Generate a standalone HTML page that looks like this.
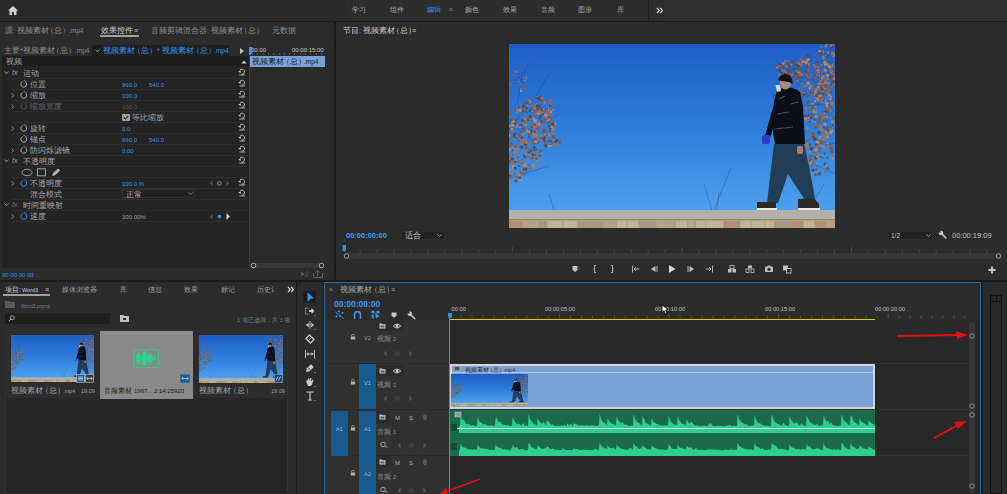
<!DOCTYPE html>
<html><head><meta charset="utf-8">
<style>
*{margin:0;padding:0;box-sizing:border-box}
html,body{width:1007px;height:494px;overflow:hidden;background:#1b1b1b;font-family:"Liberation Sans",sans-serif;color:#a8a8a8;font-size:8px}
.a{position:absolute}
.t{position:absolute;white-space:nowrap;line-height:10px}
.s{font-size:6.5px}
b{font-weight:normal}
.lp{margin-left:-2.5px}
.rp{margin-right:-1.5px}
</style></head><body>
<svg width="0" height="0" style="position:absolute">
<defs>
<linearGradient id="sky" x1="0" y1="0" x2="0" y2="1">
<stop offset="0" stop-color="#1f5ec6"/><stop offset="0.45" stop-color="#2d7cda"/><stop offset="0.9" stop-color="#4c9fee"/>
</linearGradient>
<symbol id="scene" viewBox="0 0 326 184" preserveAspectRatio="none"><rect width="326" height="184" fill="url(#sky)"/><g stroke="#3a3a50" stroke-width="0.6" fill="none" opacity="0.6"><path d="M0 42 L14 30 L20 18 M0 70 L25 55 L40 30 M0 95 L30 80 L50 70 M0 120 L28 110 L45 98 M0 135 L20 128 L40 122 M8 60 L12 40"/><path d="M326 20 L300 35 L270 22 M326 60 L290 62 L262 50 M326 100 L300 95 L285 110 M326 130 L305 120 L290 130 M326 45 L310 5"/><path d="M205 166 L222 124 M203 166 L195 140 M208 166 L210 148 M300 166 L315 140 M290 166 L300 150 M45 166 L40 150"/></g><circle cx="1.4" cy="84.4" r="1.7" fill="#a87050" opacity="0.85"/><circle cx="-2.9" cy="85.5" r="0.8" fill="#4a4a5a" opacity="0.85"/><circle cx="-0.6" cy="78.8" r="1.6" fill="#9a6448" opacity="0.85"/><circle cx="10.8" cy="82.5" r="1.2" fill="#c09070" opacity="0.85"/><circle cx="6.7" cy="68.5" r="1.1" fill="#a87050" opacity="0.85"/><circle cx="8.4" cy="67.1" r="0.8" fill="#9a6448" opacity="0.85"/><circle cx="23.2" cy="75.6" r="0.6" fill="#b07a58" opacity="0.85"/><circle cx="1.4" cy="69.7" r="1.0" fill="#7a5448" opacity="0.85"/><circle cx="30.3" cy="68.0" r="1.4" fill="#a87050" opacity="0.85"/><circle cx="27.6" cy="80.2" r="1.4" fill="#a87050" opacity="0.85"/><circle cx="45.9" cy="79.7" r="1.6" fill="#c09070" opacity="0.85"/><circle cx="19.4" cy="97.4" r="1.2" fill="#9a6448" opacity="0.85"/><circle cx="40.6" cy="87.5" r="1.1" fill="#4a4a5a" opacity="0.85"/><circle cx="18.3" cy="85.0" r="0.6" fill="#c09070" opacity="0.85"/><circle cx="31.9" cy="80.0" r="1.7" fill="#a87050" opacity="0.85"/><circle cx="4.5" cy="91.9" r="1.1" fill="#7a5448" opacity="0.85"/><circle cx="4.2" cy="67.2" r="0.9" fill="#9a6448" opacity="0.85"/><circle cx="18.8" cy="82.3" r="1.1" fill="#9a6448" opacity="0.85"/><circle cx="34.5" cy="92.6" r="0.6" fill="#a87050" opacity="0.85"/><circle cx="23.2" cy="71.9" r="1.3" fill="#a87050" opacity="0.85"/><circle cx="-5.8" cy="78.9" r="1.5" fill="#a87050" opacity="0.85"/><circle cx="14.5" cy="74.6" r="1.1" fill="#b07a58" opacity="0.85"/><circle cx="44.2" cy="80.1" r="1.8" fill="#7a5448" opacity="0.85"/><circle cx="11.8" cy="97.7" r="0.9" fill="#a87050" opacity="0.85"/><circle cx="40.2" cy="79.6" r="1.3" fill="#9a6448" opacity="0.85"/><circle cx="32.0" cy="79.4" r="0.9" fill="#4a4a5a" opacity="0.85"/><circle cx="1.8" cy="68.4" r="1.1" fill="#9a6448" opacity="0.85"/><circle cx="36.8" cy="88.2" r="0.9" fill="#7a5448" opacity="0.85"/><circle cx="6.1" cy="91.6" r="0.8" fill="#7a5448" opacity="0.85"/><circle cx="0.4" cy="81.5" r="1.6" fill="#b07a58" opacity="0.85"/><circle cx="9.9" cy="72.0" r="0.9" fill="#7a5448" opacity="0.85"/><circle cx="20.0" cy="88.7" r="1.5" fill="#7a5448" opacity="0.85"/><circle cx="28.3" cy="98.4" r="1.7" fill="#7a5448" opacity="0.85"/><circle cx="25.0" cy="82.1" r="0.7" fill="#7a5448" opacity="0.85"/><circle cx="32.3" cy="77.7" r="1.4" fill="#5e4444" opacity="0.85"/><circle cx="-1.7" cy="89.1" r="1.2" fill="#7a5448" opacity="0.85"/><circle cx="30.0" cy="95.1" r="0.7" fill="#b07a58" opacity="0.85"/><circle cx="-0.8" cy="82.1" r="1.3" fill="#9a6448" opacity="0.85"/><circle cx="15.3" cy="98.8" r="0.8" fill="#9a6448" opacity="0.85"/><circle cx="35.1" cy="85.4" r="0.9" fill="#9a6448" opacity="0.85"/><circle cx="27.1" cy="90.9" r="1.3" fill="#b07a58" opacity="0.85"/><circle cx="28.1" cy="84.1" r="1.1" fill="#5e4444" opacity="0.85"/><circle cx="8.1" cy="66.1" r="1.3" fill="#b07a58" opacity="0.85"/><circle cx="-1.1" cy="69.7" r="1.2" fill="#5e4444" opacity="0.85"/><circle cx="12.3" cy="61.3" r="0.6" fill="#c09070" opacity="0.85"/><circle cx="26.0" cy="82.4" r="1.0" fill="#b07a58" opacity="0.85"/><circle cx="27.1" cy="80.0" r="1.3" fill="#c09070" opacity="0.85"/><circle cx="44.2" cy="85.3" r="1.5" fill="#b07a58" opacity="0.85"/><circle cx="26.7" cy="61.6" r="1.0" fill="#c09070" opacity="0.85"/><circle cx="12.9" cy="80.9" r="1.6" fill="#4a4a5a" opacity="0.85"/><circle cx="38.1" cy="82.7" r="0.6" fill="#c09070" opacity="0.85"/><circle cx="5.3" cy="90.3" r="1.3" fill="#9a6448" opacity="0.85"/><circle cx="27.4" cy="83.7" r="0.9" fill="#a87050" opacity="0.85"/><circle cx="17.8" cy="67.7" r="1.5" fill="#7a5448" opacity="0.85"/><circle cx="2.9" cy="83.6" r="1.2" fill="#7a5448" opacity="0.85"/><circle cx="20.0" cy="76.5" r="1.3" fill="#a87050" opacity="0.85"/><circle cx="45.2" cy="82.7" r="0.7" fill="#4a4a5a" opacity="0.85"/><circle cx="1.2" cy="67.4" r="0.9" fill="#9a6448" opacity="0.85"/><circle cx="13.4" cy="85.6" r="1.3" fill="#7a5448" opacity="0.85"/><circle cx="32.0" cy="96.7" r="1.4" fill="#a87050" opacity="0.85"/><circle cx="7.2" cy="80.1" r="1.1" fill="#5e4444" opacity="0.85"/><circle cx="25.4" cy="92.4" r="1.6" fill="#b07a58" opacity="0.85"/><circle cx="31.8" cy="71.5" r="1.3" fill="#5e4444" opacity="0.85"/><circle cx="22.4" cy="87.1" r="1.0" fill="#4a4a5a" opacity="0.85"/><circle cx="26.4" cy="81.3" r="1.8" fill="#4a4a5a" opacity="0.85"/><circle cx="28.5" cy="91.7" r="0.9" fill="#b07a58" opacity="0.85"/><circle cx="27.8" cy="69.2" r="1.2" fill="#c09070" opacity="0.85"/><circle cx="10.5" cy="96.8" r="1.8" fill="#a87050" opacity="0.85"/><circle cx="9.9" cy="96.5" r="0.9" fill="#7a5448" opacity="0.85"/><circle cx="41.1" cy="84.3" r="1.3" fill="#5e4444" opacity="0.85"/><circle cx="8.5" cy="67.9" r="1.4" fill="#a87050" opacity="0.85"/><circle cx="16.1" cy="80.9" r="1.6" fill="#b07a58" opacity="0.85"/><circle cx="24.2" cy="62.4" r="1.8" fill="#9a6448" opacity="0.85"/><circle cx="0.5" cy="85.2" r="1.4" fill="#4a4a5a" opacity="0.85"/><circle cx="15.1" cy="84.1" r="0.8" fill="#4a4a5a" opacity="0.85"/><circle cx="9.1" cy="81.3" r="0.6" fill="#a87050" opacity="0.85"/><circle cx="15.2" cy="79.2" r="0.9" fill="#4a4a5a" opacity="0.85"/><circle cx="7.7" cy="93.8" r="1.2" fill="#7a5448" opacity="0.85"/><circle cx="30.4" cy="79.8" r="1.6" fill="#c09070" opacity="0.85"/><circle cx="26.4" cy="76.7" r="1.7" fill="#c09070" opacity="0.85"/><circle cx="6.7" cy="88.7" r="0.8" fill="#9a6448" opacity="0.85"/><circle cx="6.0" cy="90.5" r="1.7" fill="#4a4a5a" opacity="0.85"/><circle cx="26.4" cy="69.4" r="1.0" fill="#b07a58" opacity="0.85"/><circle cx="39.7" cy="90.8" r="1.6" fill="#c09070" opacity="0.85"/><circle cx="29.1" cy="86.9" r="1.1" fill="#9a6448" opacity="0.85"/><circle cx="38.9" cy="77.9" r="1.5" fill="#5e4444" opacity="0.85"/><circle cx="18.4" cy="96.9" r="0.6" fill="#7a5448" opacity="0.85"/><circle cx="35.0" cy="86.6" r="1.3" fill="#4a4a5a" opacity="0.85"/><circle cx="16.1" cy="98.9" r="0.9" fill="#4a4a5a" opacity="0.85"/><circle cx="41.4" cy="87.0" r="0.8" fill="#5e4444" opacity="0.85"/><circle cx="10.3" cy="62.4" r="1.2" fill="#7a5448" opacity="0.85"/><circle cx="35.2" cy="71.6" r="1.4" fill="#a87050" opacity="0.85"/><circle cx="37.2" cy="75.3" r="1.7" fill="#9a6448" opacity="0.85"/><circle cx="20.8" cy="66.8" r="1.3" fill="#4a4a5a" opacity="0.85"/><circle cx="17.2" cy="64.2" r="1.2" fill="#4a4a5a" opacity="0.85"/><circle cx="31.0" cy="74.4" r="1.4" fill="#4a4a5a" opacity="0.85"/><circle cx="33.9" cy="68.6" r="1.0" fill="#b07a58" opacity="0.85"/><circle cx="38.5" cy="77.1" r="1.3" fill="#b07a58" opacity="0.85"/><circle cx="12.5" cy="83.6" r="0.6" fill="#a87050" opacity="0.85"/><circle cx="45.2" cy="83.4" r="1.2" fill="#a87050" opacity="0.85"/><circle cx="-4.9" cy="74.6" r="0.7" fill="#9a6448" opacity="0.85"/><circle cx="17.6" cy="75.2" r="1.2" fill="#a87050" opacity="0.85"/><circle cx="40.4" cy="71.5" r="1.1" fill="#b07a58" opacity="0.85"/><circle cx="10.9" cy="81.2" r="1.1" fill="#4a4a5a" opacity="0.85"/><circle cx="42.9" cy="72.5" r="1.2" fill="#9a6448" opacity="0.85"/><circle cx="27.3" cy="94.7" r="1.7" fill="#b07a58" opacity="0.85"/><circle cx="12.4" cy="61.1" r="0.6" fill="#b07a58" opacity="0.85"/><circle cx="23.1" cy="96.4" r="1.0" fill="#5e4444" opacity="0.85"/><circle cx="20.6" cy="94.1" r="1.2" fill="#7a5448" opacity="0.85"/><circle cx="33.3" cy="90.0" r="0.9" fill="#b07a58" opacity="0.85"/><circle cx="12.7" cy="62.1" r="0.6" fill="#c09070" opacity="0.85"/><circle cx="3.8" cy="87.5" r="0.8" fill="#b07a58" opacity="0.85"/><circle cx="32.5" cy="69.0" r="0.9" fill="#b07a58" opacity="0.85"/><circle cx="32.1" cy="67.4" r="1.6" fill="#b07a58" opacity="0.85"/><circle cx="37.7" cy="71.9" r="1.0" fill="#b07a58" opacity="0.85"/><circle cx="14.1" cy="90.3" r="1.7" fill="#b07a58" opacity="0.85"/><circle cx="22.0" cy="71.3" r="0.7" fill="#b07a58" opacity="0.85"/><circle cx="25.2" cy="84.4" r="1.1" fill="#a87050" opacity="0.85"/><circle cx="28.3" cy="68.7" r="1.5" fill="#b07a58" opacity="0.85"/><circle cx="26.3" cy="95.1" r="1.6" fill="#9a6448" opacity="0.85"/><circle cx="26.5" cy="95.7" r="1.7" fill="#5e4444" opacity="0.85"/><circle cx="33.8" cy="89.4" r="1.5" fill="#7a5448" opacity="0.85"/><circle cx="43.7" cy="79.8" r="1.6" fill="#a87050" opacity="0.85"/><circle cx="24.0" cy="82.4" r="1.3" fill="#7a5448" opacity="0.85"/><circle cx="34.9" cy="72.2" r="0.8" fill="#9a6448" opacity="0.85"/><circle cx="26.8" cy="97.6" r="1.8" fill="#c09070" opacity="0.85"/><circle cx="25.3" cy="82.8" r="1.7" fill="#a87050" opacity="0.85"/><circle cx="27.1" cy="82.9" r="1.1" fill="#a87050" opacity="0.85"/><circle cx="3.0" cy="78.7" r="1.3" fill="#9a6448" opacity="0.85"/><circle cx="16.5" cy="77.0" r="0.8" fill="#a87050" opacity="0.85"/><circle cx="-1.4" cy="84.9" r="1.1" fill="#b07a58" opacity="0.85"/><circle cx="13.7" cy="76.2" r="1.6" fill="#5e4444" opacity="0.85"/><circle cx="38.2" cy="68.9" r="1.4" fill="#4a4a5a" opacity="0.85"/><circle cx="41.2" cy="69.5" r="1.3" fill="#b07a58" opacity="0.85"/><circle cx="-5.8" cy="79.5" r="1.6" fill="#5e4444" opacity="0.85"/><circle cx="18.4" cy="86.7" r="1.5" fill="#b07a58" opacity="0.85"/><circle cx="26.5" cy="68.3" r="1.7" fill="#7a5448" opacity="0.85"/><circle cx="12.3" cy="63.5" r="1.5" fill="#a87050" opacity="0.85"/><circle cx="23.0" cy="88.3" r="1.6" fill="#5e4444" opacity="0.85"/><circle cx="17.4" cy="80.4" r="1.0" fill="#c09070" opacity="0.85"/><circle cx="24.7" cy="77.4" r="0.9" fill="#c09070" opacity="0.85"/><circle cx="16.3" cy="88.9" r="1.1" fill="#b07a58" opacity="0.85"/><circle cx="4.1" cy="77.4" r="1.8" fill="#c09070" opacity="0.85"/><circle cx="22.1" cy="86.7" r="1.1" fill="#7a5448" opacity="0.85"/><circle cx="40.2" cy="82.2" r="1.5" fill="#5e4444" opacity="0.85"/><circle cx="2.7" cy="84.9" r="1.5" fill="#c09070" opacity="0.85"/><circle cx="14.2" cy="84.4" r="0.9" fill="#5e4444" opacity="0.85"/><circle cx="2.4" cy="75.6" r="1.8" fill="#7a5448" opacity="0.85"/><circle cx="24.7" cy="74.8" r="1.1" fill="#c09070" opacity="0.85"/><circle cx="37.8" cy="87.1" r="1.5" fill="#9a6448" opacity="0.85"/><circle cx="1.0" cy="92.7" r="1.1" fill="#b07a58" opacity="0.85"/><circle cx="31.8" cy="68.4" r="1.3" fill="#a87050" opacity="0.85"/><circle cx="35.9" cy="75.6" r="1.2" fill="#7a5448" opacity="0.85"/><circle cx="12.8" cy="93.5" r="1.2" fill="#5e4444" opacity="0.85"/><circle cx="7.1" cy="76.0" r="1.5" fill="#5e4444" opacity="0.85"/><circle cx="42.5" cy="83.0" r="1.3" fill="#c09070" opacity="0.85"/><circle cx="32.5" cy="94.5" r="1.1" fill="#5e4444" opacity="0.85"/><circle cx="19.9" cy="75.5" r="1.8" fill="#5e4444" opacity="0.85"/><circle cx="42.1" cy="88.5" r="1.1" fill="#a87050" opacity="0.85"/><circle cx="19.9" cy="97.4" r="0.7" fill="#9a6448" opacity="0.85"/><circle cx="40.4" cy="73.5" r="1.2" fill="#4a4a5a" opacity="0.85"/><circle cx="20.7" cy="96.8" r="0.7" fill="#a87050" opacity="0.85"/><circle cx="8.7" cy="82.5" r="0.7" fill="#7a5448" opacity="0.85"/><circle cx="28.8" cy="90.0" r="0.8" fill="#a87050" opacity="0.85"/><circle cx="7.2" cy="82.8" r="1.3" fill="#a87050" opacity="0.85"/><circle cx="5.3" cy="93.0" r="1.6" fill="#b07a58" opacity="0.85"/><circle cx="41.3" cy="75.0" r="0.9" fill="#9a6448" opacity="0.85"/><circle cx="5.6" cy="79.8" r="1.2" fill="#4a4a5a" opacity="0.85"/><circle cx="11.4" cy="88.1" r="1.4" fill="#7a5448" opacity="0.85"/><circle cx="16.4" cy="71.7" r="0.9" fill="#b07a58" opacity="0.85"/><circle cx="24.8" cy="89.3" r="1.8" fill="#b07a58" opacity="0.85"/><circle cx="23.7" cy="77.3" r="0.7" fill="#5e4444" opacity="0.85"/><circle cx="19.7" cy="83.3" r="0.6" fill="#b07a58" opacity="0.85"/><circle cx="13.2" cy="78.6" r="0.7" fill="#c09070" opacity="0.85"/><circle cx="26.7" cy="88.2" r="1.8" fill="#a87050" opacity="0.85"/><circle cx="8.2" cy="81.2" r="1.0" fill="#c09070" opacity="0.85"/><circle cx="36.2" cy="93.9" r="1.6" fill="#a87050" opacity="0.85"/><circle cx="27.5" cy="65.3" r="1.5" fill="#b07a58" opacity="0.85"/><circle cx="-1.1" cy="85.9" r="1.1" fill="#b07a58" opacity="0.85"/><circle cx="5.7" cy="91.9" r="1.8" fill="#5e4444" opacity="0.85"/><circle cx="14.2" cy="96.9" r="1.6" fill="#b07a58" opacity="0.85"/><circle cx="5.8" cy="85.3" r="0.7" fill="#5e4444" opacity="0.85"/><circle cx="26.6" cy="82.7" r="1.3" fill="#a87050" opacity="0.85"/><circle cx="27.1" cy="67.5" r="1.6" fill="#9a6448" opacity="0.85"/><circle cx="30.7" cy="84.2" r="1.4" fill="#9a6448" opacity="0.85"/><circle cx="13.8" cy="66.8" r="1.5" fill="#5e4444" opacity="0.85"/><circle cx="18.0" cy="87.4" r="1.0" fill="#c09070" opacity="0.85"/><circle cx="8.5" cy="96.9" r="1.0" fill="#a87050" opacity="0.85"/><circle cx="-2.6" cy="71.9" r="1.7" fill="#5e4444" opacity="0.85"/><circle cx="-1.6" cy="86.8" r="1.0" fill="#5e4444" opacity="0.85"/><circle cx="24.6" cy="99.4" r="1.5" fill="#7a5448" opacity="0.85"/><circle cx="20.2" cy="92.0" r="1.0" fill="#5e4444" opacity="0.85"/><circle cx="11.2" cy="66.3" r="1.6" fill="#c09070" opacity="0.85"/><circle cx="-1.4" cy="73.0" r="1.2" fill="#4a4a5a" opacity="0.85"/><circle cx="10.8" cy="75.4" r="0.7" fill="#a87050" opacity="0.85"/><circle cx="30.1" cy="72.8" r="0.6" fill="#7a5448" opacity="0.85"/><circle cx="29.7" cy="82.8" r="1.0" fill="#9a6448" opacity="0.85"/><circle cx="6.4" cy="65.4" r="0.7" fill="#7a5448" opacity="0.85"/><circle cx="13.4" cy="93.9" r="1.0" fill="#5e4444" opacity="0.85"/><circle cx="18.0" cy="61.1" r="0.7" fill="#c09070" opacity="0.85"/><circle cx="15.4" cy="74.9" r="1.6" fill="#a87050" opacity="0.85"/><circle cx="20.3" cy="89.4" r="1.5" fill="#7a5448" opacity="0.85"/><circle cx="10.7" cy="91.5" r="1.0" fill="#4a4a5a" opacity="0.85"/><circle cx="40.9" cy="76.8" r="1.2" fill="#7a5448" opacity="0.85"/><circle cx="22.4" cy="74.9" r="1.3" fill="#9a6448" opacity="0.85"/><circle cx="-0.0" cy="89.7" r="1.4" fill="#4a4a5a" opacity="0.85"/><circle cx="36.0" cy="80.3" r="0.7" fill="#a87050" opacity="0.85"/><circle cx="40.1" cy="75.8" r="1.2" fill="#c09070" opacity="0.85"/><circle cx="28.6" cy="80.4" r="1.7" fill="#b07a58" opacity="0.85"/><circle cx="20.3" cy="88.1" r="1.4" fill="#c09070" opacity="0.85"/><circle cx="25.8" cy="87.9" r="1.1" fill="#5e4444" opacity="0.85"/><circle cx="16.3" cy="98.6" r="1.2" fill="#c09070" opacity="0.85"/><circle cx="35.7" cy="90.6" r="1.5" fill="#b07a58" opacity="0.85"/><circle cx="39.2" cy="70.9" r="0.6" fill="#a87050" opacity="0.85"/><circle cx="24.2" cy="77.9" r="0.7" fill="#b07a58" opacity="0.85"/><circle cx="7.4" cy="91.9" r="1.3" fill="#a87050" opacity="0.85"/><circle cx="9.8" cy="74.7" r="0.8" fill="#5e4444" opacity="0.85"/><circle cx="-0.3" cy="91.0" r="1.7" fill="#c09070" opacity="0.85"/><circle cx="-2.4" cy="74.6" r="1.2" fill="#5e4444" opacity="0.85"/><circle cx="3.6" cy="81.2" r="1.7" fill="#c09070" opacity="0.85"/><circle cx="-4.3" cy="74.3" r="1.2" fill="#b07a58" opacity="0.85"/><circle cx="10.2" cy="85.5" r="0.8" fill="#4a4a5a" opacity="0.85"/><circle cx="5.8" cy="89.6" r="1.2" fill="#5e4444" opacity="0.85"/><circle cx="21.5" cy="75.3" r="1.7" fill="#9a6448" opacity="0.85"/><circle cx="37.4" cy="66.5" r="1.1" fill="#b07a58" opacity="0.85"/><circle cx="15.4" cy="64.8" r="0.8" fill="#b07a58" opacity="0.85"/><circle cx="21.4" cy="72.5" r="1.7" fill="#4a4a5a" opacity="0.85"/><circle cx="-0.6" cy="78.4" r="1.8" fill="#5e4444" opacity="0.85"/><circle cx="14.0" cy="79.5" r="1.3" fill="#b07a58" opacity="0.85"/><circle cx="43.6" cy="80.2" r="1.6" fill="#4a4a5a" opacity="0.85"/><circle cx="36.6" cy="66.3" r="1.3" fill="#7a5448" opacity="0.85"/><circle cx="39.1" cy="66.0" r="1.2" fill="#c09070" opacity="0.85"/><circle cx="17.3" cy="57.2" r="1.0" fill="#4a4a5a" opacity="0.85"/><circle cx="32.7" cy="66.1" r="1.4" fill="#4a4a5a" opacity="0.85"/><circle cx="33.4" cy="57.9" r="1.3" fill="#7a5448" opacity="0.85"/><circle cx="14.4" cy="62.4" r="1.8" fill="#5e4444" opacity="0.85"/><circle cx="28.4" cy="64.6" r="1.0" fill="#a87050" opacity="0.85"/><circle cx="27.9" cy="59.8" r="0.7" fill="#b07a58" opacity="0.85"/><circle cx="37.9" cy="65.9" r="1.2" fill="#4a4a5a" opacity="0.85"/><circle cx="36.2" cy="54.9" r="0.6" fill="#a87050" opacity="0.85"/><circle cx="27.4" cy="55.3" r="1.0" fill="#9a6448" opacity="0.85"/><circle cx="28.4" cy="62.3" r="1.8" fill="#4a4a5a" opacity="0.85"/><circle cx="27.1" cy="52.7" r="0.8" fill="#c09070" opacity="0.85"/><circle cx="21.6" cy="67.2" r="1.0" fill="#5e4444" opacity="0.85"/><circle cx="30.4" cy="54.5" r="0.7" fill="#b07a58" opacity="0.85"/><circle cx="34.2" cy="70.1" r="1.0" fill="#5e4444" opacity="0.85"/><circle cx="17.4" cy="58.7" r="1.0" fill="#4a4a5a" opacity="0.85"/><circle cx="26.2" cy="64.1" r="1.3" fill="#b07a58" opacity="0.85"/><circle cx="24.1" cy="54.4" r="0.8" fill="#a87050" opacity="0.85"/><circle cx="40.6" cy="63.5" r="1.4" fill="#9a6448" opacity="0.85"/><circle cx="30.9" cy="65.9" r="0.7" fill="#a87050" opacity="0.85"/><circle cx="31.2" cy="56.2" r="1.6" fill="#7a5448" opacity="0.85"/><circle cx="34.7" cy="65.5" r="0.8" fill="#c09070" opacity="0.85"/><circle cx="23.1" cy="65.8" r="1.1" fill="#9a6448" opacity="0.85"/><circle cx="28.2" cy="54.3" r="1.0" fill="#4a4a5a" opacity="0.85"/><circle cx="33.2" cy="54.1" r="1.3" fill="#9a6448" opacity="0.85"/><circle cx="29.5" cy="66.3" r="1.0" fill="#a87050" opacity="0.85"/><circle cx="37.7" cy="65.8" r="1.2" fill="#4a4a5a" opacity="0.85"/><circle cx="28.6" cy="65.1" r="1.5" fill="#5e4444" opacity="0.85"/><circle cx="31.6" cy="52.5" r="1.3" fill="#5e4444" opacity="0.85"/><circle cx="21.3" cy="57.4" r="1.3" fill="#b07a58" opacity="0.85"/><circle cx="41.5" cy="61.4" r="1.5" fill="#4a4a5a" opacity="0.85"/><circle cx="41.1" cy="59.0" r="0.6" fill="#c09070" opacity="0.85"/><circle cx="31.5" cy="64.7" r="0.9" fill="#7a5448" opacity="0.85"/><circle cx="22.0" cy="64.9" r="0.7" fill="#4a4a5a" opacity="0.85"/><circle cx="23.0" cy="67.2" r="0.7" fill="#c09070" opacity="0.85"/><circle cx="40.0" cy="69.2" r="1.3" fill="#7a5448" opacity="0.85"/><circle cx="44.1" cy="65.7" r="0.8" fill="#c09070" opacity="0.85"/><circle cx="44.4" cy="61.6" r="1.3" fill="#9a6448" opacity="0.85"/><circle cx="30.9" cy="61.8" r="1.4" fill="#5e4444" opacity="0.85"/><circle cx="30.7" cy="69.6" r="1.6" fill="#b07a58" opacity="0.85"/><circle cx="18.2" cy="56.8" r="1.1" fill="#a87050" opacity="0.85"/><circle cx="36.8" cy="71.0" r="1.7" fill="#c09070" opacity="0.85"/><circle cx="39.0" cy="68.6" r="1.6" fill="#a87050" opacity="0.85"/><circle cx="20.4" cy="56.7" r="1.5" fill="#b07a58" opacity="0.85"/><circle cx="33.4" cy="68.5" r="0.8" fill="#a87050" opacity="0.85"/><circle cx="37.5" cy="66.3" r="1.0" fill="#b07a58" opacity="0.85"/><circle cx="29.0" cy="69.5" r="1.0" fill="#c09070" opacity="0.85"/><circle cx="32.9" cy="53.7" r="1.5" fill="#a87050" opacity="0.85"/><circle cx="42.0" cy="60.0" r="1.2" fill="#a87050" opacity="0.85"/><circle cx="42.2" cy="56.2" r="1.3" fill="#a87050" opacity="0.85"/><circle cx="30.1" cy="55.0" r="1.8" fill="#4a4a5a" opacity="0.85"/><circle cx="41.0" cy="57.3" r="1.6" fill="#9a6448" opacity="0.85"/><circle cx="16.1" cy="58.2" r="1.2" fill="#7a5448" opacity="0.85"/><circle cx="19.7" cy="61.2" r="0.6" fill="#9a6448" opacity="0.85"/><circle cx="26.4" cy="69.5" r="1.1" fill="#a87050" opacity="0.85"/><circle cx="18.7" cy="57.0" r="1.0" fill="#7a5448" opacity="0.85"/><circle cx="35.7" cy="58.6" r="1.6" fill="#b07a58" opacity="0.85"/><circle cx="19.9" cy="61.9" r="0.7" fill="#c09070" opacity="0.85"/><circle cx="42.0" cy="67.9" r="1.3" fill="#c09070" opacity="0.85"/><circle cx="7.1" cy="116.7" r="0.7" fill="#c09070" opacity="0.85"/><circle cx="28.4" cy="109.3" r="1.6" fill="#a87050" opacity="0.85"/><circle cx="7.3" cy="109.5" r="1.4" fill="#a87050" opacity="0.85"/><circle cx="-1.6" cy="105.8" r="0.7" fill="#4a4a5a" opacity="0.85"/><circle cx="25.6" cy="123.0" r="1.3" fill="#a87050" opacity="0.85"/><circle cx="22.9" cy="112.0" r="1.0" fill="#5e4444" opacity="0.85"/><circle cx="19.6" cy="121.4" r="1.1" fill="#7a5448" opacity="0.85"/><circle cx="5.4" cy="117.7" r="1.3" fill="#9a6448" opacity="0.85"/><circle cx="9.8" cy="122.1" r="1.0" fill="#5e4444" opacity="0.85"/><circle cx="-3.4" cy="112.2" r="1.8" fill="#a87050" opacity="0.85"/><circle cx="19.9" cy="107.0" r="1.6" fill="#c09070" opacity="0.85"/><circle cx="20.3" cy="107.7" r="1.6" fill="#5e4444" opacity="0.85"/><circle cx="15.8" cy="110.8" r="1.4" fill="#c09070" opacity="0.85"/><circle cx="22.1" cy="111.8" r="1.4" fill="#b07a58" opacity="0.85"/><circle cx="30.9" cy="107.1" r="1.4" fill="#5e4444" opacity="0.85"/><circle cx="12.5" cy="103.2" r="1.7" fill="#4a4a5a" opacity="0.85"/><circle cx="-0.8" cy="119.2" r="1.0" fill="#4a4a5a" opacity="0.85"/><circle cx="9.2" cy="113.5" r="0.9" fill="#5e4444" opacity="0.85"/><circle cx="24.9" cy="121.1" r="0.9" fill="#c09070" opacity="0.85"/><circle cx="15.3" cy="125.0" r="1.5" fill="#5e4444" opacity="0.85"/><circle cx="18.3" cy="101.1" r="0.7" fill="#7a5448" opacity="0.85"/><circle cx="15.3" cy="120.7" r="1.7" fill="#c09070" opacity="0.85"/><circle cx="15.0" cy="117.8" r="1.4" fill="#a87050" opacity="0.85"/><circle cx="25.9" cy="110.9" r="1.2" fill="#7a5448" opacity="0.85"/><circle cx="15.3" cy="111.3" r="1.3" fill="#7a5448" opacity="0.85"/><circle cx="13.9" cy="126.3" r="0.7" fill="#5e4444" opacity="0.85"/><circle cx="21.8" cy="111.5" r="0.8" fill="#c09070" opacity="0.85"/><circle cx="6.6" cy="109.9" r="1.7" fill="#9a6448" opacity="0.85"/><circle cx="1.6" cy="101.4" r="1.3" fill="#9a6448" opacity="0.85"/><circle cx="25.5" cy="107.1" r="0.8" fill="#7a5448" opacity="0.85"/><circle cx="16.9" cy="97.0" r="1.0" fill="#a87050" opacity="0.85"/><circle cx="16.7" cy="100.7" r="1.2" fill="#4a4a5a" opacity="0.85"/><circle cx="2.2" cy="100.1" r="1.5" fill="#7a5448" opacity="0.85"/><circle cx="21.3" cy="124.5" r="0.8" fill="#7a5448" opacity="0.85"/><circle cx="0.5" cy="117.2" r="1.3" fill="#5e4444" opacity="0.85"/><circle cx="17.6" cy="98.1" r="0.9" fill="#a87050" opacity="0.85"/><circle cx="-2.0" cy="108.0" r="1.3" fill="#5e4444" opacity="0.85"/><circle cx="27.6" cy="114.7" r="1.5" fill="#7a5448" opacity="0.85"/><circle cx="-2.0" cy="116.8" r="1.0" fill="#7a5448" opacity="0.85"/><circle cx="26.6" cy="113.3" r="1.1" fill="#a87050" opacity="0.85"/><circle cx="11.2" cy="97.4" r="0.6" fill="#9a6448" opacity="0.85"/><circle cx="25.3" cy="105.4" r="1.3" fill="#4a4a5a" opacity="0.85"/><circle cx="11.5" cy="99.6" r="0.7" fill="#a87050" opacity="0.85"/><circle cx="23.7" cy="114.4" r="1.3" fill="#7a5448" opacity="0.85"/><circle cx="17.0" cy="98.3" r="1.2" fill="#c09070" opacity="0.85"/><circle cx="17.2" cy="106.0" r="0.9" fill="#b07a58" opacity="0.85"/><circle cx="-0.6" cy="112.3" r="1.3" fill="#a87050" opacity="0.85"/><circle cx="24.7" cy="115.8" r="1.0" fill="#b07a58" opacity="0.85"/><circle cx="9.0" cy="97.0" r="0.8" fill="#4a4a5a" opacity="0.85"/><circle cx="15.3" cy="96.2" r="0.8" fill="#a87050" opacity="0.85"/><circle cx="-3.7" cy="109.8" r="0.6" fill="#a87050" opacity="0.85"/><circle cx="19.2" cy="108.2" r="1.1" fill="#5e4444" opacity="0.85"/><circle cx="-3.1" cy="114.7" r="1.8" fill="#c09070" opacity="0.85"/><circle cx="29.7" cy="111.7" r="1.5" fill="#b07a58" opacity="0.85"/><circle cx="12.2" cy="117.3" r="1.6" fill="#a87050" opacity="0.85"/><circle cx="-2.9" cy="115.7" r="1.0" fill="#5e4444" opacity="0.85"/><circle cx="30.3" cy="106.9" r="0.9" fill="#b07a58" opacity="0.85"/><circle cx="2.1" cy="119.4" r="0.7" fill="#5e4444" opacity="0.85"/><circle cx="-1.7" cy="105.7" r="1.7" fill="#b07a58" opacity="0.85"/><circle cx="3.0" cy="114.3" r="1.6" fill="#a87050" opacity="0.85"/><circle cx="11.1" cy="114.5" r="1.1" fill="#b07a58" opacity="0.85"/><circle cx="19.4" cy="122.8" r="0.8" fill="#b07a58" opacity="0.85"/><circle cx="2.8" cy="119.2" r="1.5" fill="#a87050" opacity="0.85"/><circle cx="-3.0" cy="117.2" r="1.4" fill="#4a4a5a" opacity="0.85"/><circle cx="0.8" cy="113.0" r="1.1" fill="#9a6448" opacity="0.85"/><circle cx="10.1" cy="103.0" r="0.9" fill="#9a6448" opacity="0.85"/><circle cx="-1.4" cy="110.4" r="1.2" fill="#7a5448" opacity="0.85"/><circle cx="27.5" cy="105.7" r="0.9" fill="#5e4444" opacity="0.85"/><circle cx="28.4" cy="116.8" r="1.5" fill="#b07a58" opacity="0.85"/><circle cx="15.5" cy="98.5" r="1.7" fill="#9a6448" opacity="0.85"/><circle cx="30.5" cy="111.8" r="1.1" fill="#4a4a5a" opacity="0.85"/><circle cx="21.6" cy="105.9" r="1.5" fill="#7a5448" opacity="0.85"/><circle cx="9.2" cy="104.3" r="1.3" fill="#a87050" opacity="0.85"/><circle cx="20.8" cy="113.6" r="1.3" fill="#9a6448" opacity="0.85"/><circle cx="17.0" cy="121.9" r="1.2" fill="#c09070" opacity="0.85"/><circle cx="23.9" cy="122.1" r="0.9" fill="#c09070" opacity="0.85"/><circle cx="3.5" cy="114.9" r="1.7" fill="#4a4a5a" opacity="0.85"/><circle cx="11.1" cy="125.3" r="1.1" fill="#a87050" opacity="0.85"/><circle cx="3.3" cy="111.0" r="0.7" fill="#5e4444" opacity="0.85"/><circle cx="9.3" cy="118.1" r="0.6" fill="#9a6448" opacity="0.85"/><circle cx="13.8" cy="100.9" r="0.6" fill="#4a4a5a" opacity="0.85"/><circle cx="23.7" cy="110.7" r="1.4" fill="#4a4a5a" opacity="0.85"/><circle cx="17.1" cy="125.0" r="1.4" fill="#4a4a5a" opacity="0.85"/><circle cx="19.9" cy="106.3" r="1.4" fill="#9a6448" opacity="0.85"/><circle cx="15.9" cy="106.7" r="1.2" fill="#a87050" opacity="0.85"/><circle cx="6.3" cy="118.1" r="1.2" fill="#5e4444" opacity="0.85"/><circle cx="17.1" cy="127.1" r="0.8" fill="#4a4a5a" opacity="0.85"/><circle cx="21.3" cy="123.3" r="0.9" fill="#9a6448" opacity="0.85"/><circle cx="13.2" cy="96.8" r="1.6" fill="#a87050" opacity="0.85"/><circle cx="0.9" cy="105.4" r="1.3" fill="#c09070" opacity="0.85"/><circle cx="28.7" cy="104.2" r="0.7" fill="#9a6448" opacity="0.85"/><circle cx="22.0" cy="107.6" r="1.1" fill="#4a4a5a" opacity="0.85"/><circle cx="3.4" cy="106.4" r="1.0" fill="#5e4444" opacity="0.85"/><circle cx="17.0" cy="113.3" r="1.0" fill="#5e4444" opacity="0.85"/><circle cx="5.6" cy="108.7" r="1.4" fill="#b07a58" opacity="0.85"/><circle cx="7.0" cy="104.3" r="1.0" fill="#5e4444" opacity="0.85"/><circle cx="28.9" cy="114.6" r="0.9" fill="#9a6448" opacity="0.85"/><circle cx="4.1" cy="103.0" r="1.1" fill="#a87050" opacity="0.85"/><circle cx="18.3" cy="113.6" r="1.2" fill="#a87050" opacity="0.85"/><circle cx="1.3" cy="122.3" r="0.6" fill="#b07a58" opacity="0.85"/><circle cx="10.2" cy="104.4" r="1.2" fill="#a87050" opacity="0.85"/><circle cx="20.9" cy="111.1" r="0.8" fill="#b07a58" opacity="0.85"/><circle cx="13.6" cy="119.5" r="1.2" fill="#7a5448" opacity="0.85"/><circle cx="15.1" cy="111.9" r="1.3" fill="#4a4a5a" opacity="0.85"/><circle cx="6.2" cy="102.4" r="1.3" fill="#7a5448" opacity="0.85"/><circle cx="25.2" cy="103.2" r="1.6" fill="#5e4444" opacity="0.85"/><circle cx="4.3" cy="124.4" r="1.0" fill="#c09070" opacity="0.85"/><circle cx="17.0" cy="121.7" r="0.8" fill="#b07a58" opacity="0.85"/><circle cx="17.2" cy="106.3" r="1.3" fill="#a87050" opacity="0.85"/><circle cx="17.3" cy="103.8" r="1.1" fill="#5e4444" opacity="0.85"/><circle cx="13.9" cy="100.3" r="0.9" fill="#b07a58" opacity="0.85"/><circle cx="4.2" cy="122.2" r="1.7" fill="#c09070" opacity="0.85"/><circle cx="17.2" cy="114.9" r="0.7" fill="#9a6448" opacity="0.85"/><circle cx="21.5" cy="106.1" r="1.6" fill="#7a5448" opacity="0.85"/><circle cx="15.7" cy="101.0" r="0.8" fill="#4a4a5a" opacity="0.85"/><circle cx="3.3" cy="117.8" r="1.0" fill="#a87050" opacity="0.85"/><circle cx="-2.0" cy="111.3" r="1.1" fill="#c09070" opacity="0.85"/><circle cx="6.8" cy="104.7" r="1.4" fill="#b07a58" opacity="0.85"/><circle cx="6.1" cy="124.1" r="1.6" fill="#4a4a5a" opacity="0.85"/><circle cx="26.3" cy="123.5" r="1.4" fill="#b07a58" opacity="0.85"/><circle cx="32.2" cy="91.5" r="1.4" fill="#b07a58" opacity="0.85"/><circle cx="42.9" cy="101.3" r="0.9" fill="#c09070" opacity="0.85"/><circle cx="40.6" cy="96.8" r="1.2" fill="#4a4a5a" opacity="0.85"/><circle cx="44.3" cy="95.5" r="1.3" fill="#a87050" opacity="0.85"/><circle cx="39.9" cy="101.7" r="1.0" fill="#c09070" opacity="0.85"/><circle cx="42.6" cy="95.9" r="1.3" fill="#9a6448" opacity="0.85"/><circle cx="43.6" cy="93.8" r="1.0" fill="#7a5448" opacity="0.85"/><circle cx="44.2" cy="95.9" r="0.9" fill="#9a6448" opacity="0.85"/><circle cx="45.5" cy="90.4" r="0.8" fill="#9a6448" opacity="0.85"/><circle cx="36.1" cy="101.8" r="1.4" fill="#5e4444" opacity="0.85"/><circle cx="41.7" cy="101.9" r="1.0" fill="#b07a58" opacity="0.85"/><circle cx="47.4" cy="95.5" r="1.3" fill="#7a5448" opacity="0.85"/><circle cx="37.7" cy="102.4" r="1.0" fill="#4a4a5a" opacity="0.85"/><circle cx="49.1" cy="100.2" r="0.9" fill="#a87050" opacity="0.85"/><circle cx="35.7" cy="97.1" r="1.5" fill="#5e4444" opacity="0.85"/><circle cx="35.8" cy="94.9" r="1.2" fill="#5e4444" opacity="0.85"/><circle cx="38.5" cy="97.8" r="0.8" fill="#7a5448" opacity="0.85"/><circle cx="39.8" cy="97.6" r="0.7" fill="#4a4a5a" opacity="0.85"/><circle cx="38.8" cy="97.8" r="0.8" fill="#a87050" opacity="0.85"/><circle cx="46.8" cy="100.8" r="1.6" fill="#a87050" opacity="0.85"/><circle cx="32.3" cy="96.4" r="1.4" fill="#a87050" opacity="0.85"/><circle cx="34.8" cy="94.9" r="1.2" fill="#4a4a5a" opacity="0.85"/><circle cx="35.5" cy="93.4" r="1.5" fill="#4a4a5a" opacity="0.85"/><circle cx="40.0" cy="102.3" r="1.2" fill="#c09070" opacity="0.85"/><circle cx="50.6" cy="97.9" r="1.5" fill="#7a5448" opacity="0.85"/><circle cx="42.4" cy="97.3" r="1.0" fill="#4a4a5a" opacity="0.85"/><circle cx="37.2" cy="95.4" r="1.1" fill="#b07a58" opacity="0.85"/><circle cx="46.7" cy="97.6" r="1.4" fill="#5e4444" opacity="0.85"/><circle cx="43.9" cy="90.2" r="1.3" fill="#a87050" opacity="0.85"/><circle cx="36.9" cy="100.8" r="1.3" fill="#4a4a5a" opacity="0.85"/><circle cx="43.8" cy="95.8" r="1.6" fill="#a87050" opacity="0.85"/><circle cx="44.1" cy="92.2" r="1.5" fill="#7a5448" opacity="0.85"/><circle cx="49.0" cy="96.8" r="0.8" fill="#a87050" opacity="0.85"/><circle cx="38.6" cy="91.1" r="0.9" fill="#5e4444" opacity="0.85"/><circle cx="34.4" cy="92.6" r="0.9" fill="#9a6448" opacity="0.85"/><circle cx="45.6" cy="93.8" r="0.7" fill="#5e4444" opacity="0.85"/><circle cx="41.2" cy="98.9" r="0.6" fill="#b07a58" opacity="0.85"/><circle cx="30.5" cy="94.3" r="0.8" fill="#9a6448" opacity="0.85"/><circle cx="44.1" cy="99.5" r="0.8" fill="#9a6448" opacity="0.85"/><circle cx="48.5" cy="96.3" r="1.0" fill="#5e4444" opacity="0.85"/><circle cx="15.0" cy="130.3" r="1.4" fill="#9a6448" opacity="0.85"/><circle cx="11.3" cy="129.7" r="1.4" fill="#9a6448" opacity="0.85"/><circle cx="4.0" cy="130.4" r="1.1" fill="#b07a58" opacity="0.85"/><circle cx="0.9" cy="132.0" r="1.5" fill="#4a4a5a" opacity="0.85"/><circle cx="7.0" cy="136.9" r="1.5" fill="#5e4444" opacity="0.85"/><circle cx="13.2" cy="128.4" r="1.1" fill="#9a6448" opacity="0.85"/><circle cx="11.8" cy="135.8" r="1.0" fill="#c09070" opacity="0.85"/><circle cx="13.9" cy="133.6" r="0.9" fill="#a87050" opacity="0.85"/><circle cx="11.9" cy="128.3" r="1.1" fill="#7a5448" opacity="0.85"/><circle cx="10.5" cy="131.0" r="1.3" fill="#c09070" opacity="0.85"/><circle cx="1.8" cy="133.4" r="1.0" fill="#a87050" opacity="0.85"/><circle cx="3.1" cy="132.0" r="1.1" fill="#9a6448" opacity="0.85"/><circle cx="6.6" cy="131.9" r="1.2" fill="#a87050" opacity="0.85"/><circle cx="7.6" cy="133.3" r="0.7" fill="#5e4444" opacity="0.85"/><circle cx="11.2" cy="135.4" r="1.6" fill="#c09070" opacity="0.85"/><circle cx="5.5" cy="130.2" r="1.1" fill="#7a5448" opacity="0.85"/><circle cx="1.9" cy="135.2" r="0.7" fill="#a87050" opacity="0.85"/><circle cx="10.7" cy="133.7" r="1.5" fill="#4a4a5a" opacity="0.85"/><circle cx="14.7" cy="129.9" r="1.4" fill="#7a5448" opacity="0.85"/><circle cx="8.0" cy="135.1" r="0.8" fill="#9a6448" opacity="0.85"/><circle cx="8.8" cy="29.2" r="1.1" fill="#a87050" opacity="0.85"/><circle cx="10.3" cy="37.6" r="0.8" fill="#a87050" opacity="0.85"/><circle cx="8.5" cy="47.0" r="0.6" fill="#7a5448" opacity="0.85"/><circle cx="1.9" cy="40.5" r="1.2" fill="#9a6448" opacity="0.85"/><circle cx="12.9" cy="23.7" r="1.1" fill="#7a5448" opacity="0.85"/><circle cx="12.5" cy="35.4" r="1.3" fill="#4a4a5a" opacity="0.85"/><circle cx="7.9" cy="39.3" r="0.5" fill="#5e4444" opacity="0.85"/><circle cx="14.5" cy="34.2" r="0.7" fill="#a87050" opacity="0.85"/><circle cx="12.6" cy="43.9" r="1.2" fill="#7a5448" opacity="0.85"/><circle cx="3.2" cy="38.1" r="0.6" fill="#c09070" opacity="0.85"/><circle cx="12.1" cy="46.7" r="1.2" fill="#c09070" opacity="0.85"/><circle cx="17.4" cy="34.0" r="1.3" fill="#a87050" opacity="0.85"/><circle cx="15.8" cy="36.8" r="0.8" fill="#c09070" opacity="0.85"/><circle cx="17.6" cy="32.2" r="0.7" fill="#b07a58" opacity="0.85"/><circle cx="11.5" cy="40.5" r="1.1" fill="#a87050" opacity="0.85"/><circle cx="15.1" cy="37.9" r="0.7" fill="#5e4444" opacity="0.85"/><circle cx="5.4" cy="30.7" r="0.7" fill="#9a6448" opacity="0.85"/><circle cx="6.9" cy="24.8" r="0.8" fill="#5e4444" opacity="0.85"/><circle cx="10.6" cy="29.8" r="0.6" fill="#5e4444" opacity="0.85"/><circle cx="1.9" cy="41.8" r="0.8" fill="#a87050" opacity="0.85"/><circle cx="12.3" cy="39.7" r="0.6" fill="#7a5448" opacity="0.85"/><circle cx="8.6" cy="29.5" r="1.0" fill="#5e4444" opacity="0.85"/><circle cx="16.7" cy="45.2" r="1.3" fill="#9a6448" opacity="0.85"/><circle cx="7.0" cy="27.5" r="1.2" fill="#a87050" opacity="0.85"/><circle cx="12.0" cy="44.5" r="0.7" fill="#c09070" opacity="0.85"/><circle cx="318.1" cy="37.6" r="0.9" fill="#a87050" opacity="0.85"/><circle cx="298.8" cy="22.4" r="1.4" fill="#9a6448" opacity="0.85"/><circle cx="299.9" cy="22.4" r="1.1" fill="#b07a58" opacity="0.85"/><circle cx="287.9" cy="20.7" r="1.1" fill="#5e4444" opacity="0.85"/><circle cx="294.2" cy="48.7" r="1.6" fill="#7a5448" opacity="0.85"/><circle cx="319.1" cy="42.9" r="1.1" fill="#b07a58" opacity="0.85"/><circle cx="316.3" cy="39.0" r="1.0" fill="#c09070" opacity="0.85"/><circle cx="289.5" cy="22.1" r="1.8" fill="#4a4a5a" opacity="0.85"/><circle cx="308.2" cy="31.0" r="1.4" fill="#a87050" opacity="0.85"/><circle cx="313.2" cy="36.0" r="1.2" fill="#a87050" opacity="0.85"/><circle cx="296.8" cy="17.0" r="1.8" fill="#9a6448" opacity="0.85"/><circle cx="318.8" cy="31.4" r="1.6" fill="#c09070" opacity="0.85"/><circle cx="297.9" cy="30.1" r="0.7" fill="#a87050" opacity="0.85"/><circle cx="294.1" cy="15.7" r="1.7" fill="#7a5448" opacity="0.85"/><circle cx="315.0" cy="31.4" r="1.0" fill="#b07a58" opacity="0.85"/><circle cx="298.2" cy="31.3" r="1.6" fill="#9a6448" opacity="0.85"/><circle cx="313.8" cy="47.4" r="1.3" fill="#c09070" opacity="0.85"/><circle cx="319.9" cy="22.0" r="1.8" fill="#a87050" opacity="0.85"/><circle cx="306.2" cy="24.5" r="1.2" fill="#9a6448" opacity="0.85"/><circle cx="295.8" cy="41.7" r="1.6" fill="#9a6448" opacity="0.85"/><circle cx="316.0" cy="40.9" r="1.3" fill="#9a6448" opacity="0.85"/><circle cx="306.1" cy="25.3" r="1.8" fill="#7a5448" opacity="0.85"/><circle cx="316.8" cy="43.7" r="0.8" fill="#9a6448" opacity="0.85"/><circle cx="292.8" cy="31.3" r="1.0" fill="#b07a58" opacity="0.85"/><circle cx="305.3" cy="46.2" r="0.7" fill="#b07a58" opacity="0.85"/><circle cx="297.3" cy="27.2" r="0.7" fill="#b07a58" opacity="0.85"/><circle cx="309.2" cy="26.3" r="1.6" fill="#b07a58" opacity="0.85"/><circle cx="315.2" cy="45.0" r="0.8" fill="#7a5448" opacity="0.85"/><circle cx="289.4" cy="18.7" r="1.8" fill="#a87050" opacity="0.85"/><circle cx="309.6" cy="22.5" r="1.6" fill="#9a6448" opacity="0.85"/><circle cx="303.2" cy="13.5" r="0.8" fill="#7a5448" opacity="0.85"/><circle cx="294.7" cy="22.5" r="1.2" fill="#7a5448" opacity="0.85"/><circle cx="292.4" cy="16.1" r="0.7" fill="#a87050" opacity="0.85"/><circle cx="301.9" cy="41.7" r="1.2" fill="#c09070" opacity="0.85"/><circle cx="316.0" cy="25.8" r="1.2" fill="#c09070" opacity="0.85"/><circle cx="321.4" cy="31.3" r="0.8" fill="#7a5448" opacity="0.85"/><circle cx="311.2" cy="29.0" r="1.4" fill="#5e4444" opacity="0.85"/><circle cx="304.3" cy="20.8" r="1.0" fill="#a87050" opacity="0.85"/><circle cx="308.5" cy="18.8" r="1.4" fill="#5e4444" opacity="0.85"/><circle cx="300.3" cy="33.5" r="1.6" fill="#9a6448" opacity="0.85"/><circle cx="312.1" cy="43.6" r="1.0" fill="#4a4a5a" opacity="0.85"/><circle cx="306.2" cy="38.8" r="1.0" fill="#5e4444" opacity="0.85"/><circle cx="291.4" cy="48.6" r="1.2" fill="#7a5448" opacity="0.85"/><circle cx="302.9" cy="32.2" r="1.1" fill="#9a6448" opacity="0.85"/><circle cx="321.9" cy="32.8" r="1.8" fill="#5e4444" opacity="0.85"/><circle cx="322.8" cy="27.8" r="1.6" fill="#b07a58" opacity="0.85"/><circle cx="291.9" cy="21.3" r="1.0" fill="#a87050" opacity="0.85"/><circle cx="319.1" cy="44.9" r="1.0" fill="#4a4a5a" opacity="0.85"/><circle cx="314.2" cy="38.1" r="0.9" fill="#4a4a5a" opacity="0.85"/><circle cx="321.6" cy="25.9" r="1.0" fill="#9a6448" opacity="0.85"/><circle cx="301.0" cy="49.7" r="0.7" fill="#b07a58" opacity="0.85"/><circle cx="311.2" cy="21.0" r="1.0" fill="#4a4a5a" opacity="0.85"/><circle cx="311.6" cy="41.8" r="0.9" fill="#4a4a5a" opacity="0.85"/><circle cx="291.2" cy="32.8" r="0.7" fill="#b07a58" opacity="0.85"/><circle cx="320.8" cy="24.2" r="0.6" fill="#c09070" opacity="0.85"/><circle cx="305.3" cy="15.3" r="0.6" fill="#c09070" opacity="0.85"/><circle cx="292.4" cy="33.7" r="1.4" fill="#4a4a5a" opacity="0.85"/><circle cx="322.3" cy="40.8" r="1.1" fill="#4a4a5a" opacity="0.85"/><circle cx="317.2" cy="46.7" r="1.4" fill="#4a4a5a" opacity="0.85"/><circle cx="314.2" cy="40.4" r="1.5" fill="#9a6448" opacity="0.85"/><circle cx="316.0" cy="13.5" r="1.0" fill="#4a4a5a" opacity="0.85"/><circle cx="297.9" cy="29.8" r="0.7" fill="#5e4444" opacity="0.85"/><circle cx="298.6" cy="15.4" r="0.7" fill="#4a4a5a" opacity="0.85"/><circle cx="308.4" cy="45.7" r="1.2" fill="#4a4a5a" opacity="0.85"/><circle cx="313.2" cy="29.2" r="0.9" fill="#a87050" opacity="0.85"/><circle cx="319.2" cy="34.8" r="1.1" fill="#c09070" opacity="0.85"/><circle cx="300.5" cy="17.2" r="1.1" fill="#4a4a5a" opacity="0.85"/><circle cx="290.2" cy="44.6" r="0.7" fill="#c09070" opacity="0.85"/><circle cx="316.8" cy="16.7" r="1.0" fill="#9a6448" opacity="0.85"/><circle cx="299.9" cy="39.3" r="1.0" fill="#7a5448" opacity="0.85"/><circle cx="310.9" cy="14.8" r="1.1" fill="#7a5448" opacity="0.85"/><circle cx="312.2" cy="21.0" r="1.3" fill="#a87050" opacity="0.85"/><circle cx="301.0" cy="18.7" r="0.7" fill="#a87050" opacity="0.85"/><circle cx="306.2" cy="43.2" r="1.5" fill="#7a5448" opacity="0.85"/><circle cx="325.3" cy="37.9" r="1.6" fill="#5e4444" opacity="0.85"/><circle cx="291.6" cy="45.0" r="1.1" fill="#7a5448" opacity="0.85"/><circle cx="313.6" cy="35.7" r="1.1" fill="#7a5448" opacity="0.85"/><circle cx="290.2" cy="36.2" r="0.9" fill="#4a4a5a" opacity="0.85"/><circle cx="291.8" cy="19.6" r="1.2" fill="#b07a58" opacity="0.85"/><circle cx="322.9" cy="36.0" r="1.3" fill="#7a5448" opacity="0.85"/><circle cx="289.6" cy="32.9" r="1.1" fill="#4a4a5a" opacity="0.85"/><circle cx="297.5" cy="41.5" r="0.9" fill="#b07a58" opacity="0.85"/><circle cx="306.9" cy="41.6" r="1.2" fill="#7a5448" opacity="0.85"/><circle cx="300.0" cy="39.4" r="0.8" fill="#b07a58" opacity="0.85"/><circle cx="322.1" cy="19.5" r="1.4" fill="#5e4444" opacity="0.85"/><circle cx="320.1" cy="44.3" r="1.6" fill="#7a5448" opacity="0.85"/><circle cx="316.7" cy="17.4" r="0.9" fill="#b07a58" opacity="0.85"/><circle cx="299.3" cy="39.1" r="1.7" fill="#c09070" opacity="0.85"/><circle cx="302.0" cy="42.7" r="0.8" fill="#a87050" opacity="0.85"/><circle cx="308.3" cy="33.7" r="1.6" fill="#7a5448" opacity="0.85"/><circle cx="312.9" cy="43.2" r="1.6" fill="#7a5448" opacity="0.85"/><circle cx="315.5" cy="18.4" r="1.3" fill="#c09070" opacity="0.85"/><circle cx="314.9" cy="48.3" r="1.4" fill="#7a5448" opacity="0.85"/><circle cx="306.8" cy="20.9" r="0.7" fill="#4a4a5a" opacity="0.85"/><circle cx="292.3" cy="46.8" r="0.9" fill="#a87050" opacity="0.85"/><circle cx="300.0" cy="20.1" r="0.9" fill="#c09070" opacity="0.85"/><circle cx="288.5" cy="31.4" r="1.0" fill="#b07a58" opacity="0.85"/><circle cx="319.5" cy="39.4" r="1.3" fill="#c09070" opacity="0.85"/><circle cx="304.5" cy="19.9" r="0.6" fill="#7a5448" opacity="0.85"/><circle cx="314.4" cy="29.6" r="1.0" fill="#5e4444" opacity="0.85"/><circle cx="308.8" cy="28.1" r="1.4" fill="#9a6448" opacity="0.85"/><circle cx="314.0" cy="42.9" r="0.8" fill="#c09070" opacity="0.85"/><circle cx="326.4" cy="28.5" r="1.7" fill="#7a5448" opacity="0.85"/><circle cx="319.1" cy="39.4" r="0.8" fill="#7a5448" opacity="0.85"/><circle cx="299.1" cy="15.8" r="1.7" fill="#c09070" opacity="0.85"/><circle cx="311.6" cy="36.9" r="0.8" fill="#c09070" opacity="0.85"/><circle cx="288.6" cy="33.3" r="1.8" fill="#7a5448" opacity="0.85"/><circle cx="322.7" cy="43.1" r="0.9" fill="#b07a58" opacity="0.85"/><circle cx="298.7" cy="11.6" r="1.8" fill="#4a4a5a" opacity="0.85"/><circle cx="323.2" cy="22.8" r="1.7" fill="#9a6448" opacity="0.85"/><circle cx="289.8" cy="19.6" r="1.8" fill="#7a5448" opacity="0.85"/><circle cx="291.9" cy="20.8" r="1.7" fill="#9a6448" opacity="0.85"/><circle cx="306.1" cy="23.3" r="1.7" fill="#9a6448" opacity="0.85"/><circle cx="320.7" cy="45.2" r="1.7" fill="#9a6448" opacity="0.85"/><circle cx="297.7" cy="36.4" r="0.8" fill="#7a5448" opacity="0.85"/><circle cx="288.4" cy="29.9" r="1.5" fill="#4a4a5a" opacity="0.85"/><circle cx="316.6" cy="38.7" r="1.7" fill="#b07a58" opacity="0.85"/><circle cx="324.8" cy="28.9" r="1.1" fill="#5e4444" opacity="0.85"/><circle cx="307.6" cy="45.5" r="1.7" fill="#b07a58" opacity="0.85"/><circle cx="303.7" cy="48.8" r="1.2" fill="#5e4444" opacity="0.85"/><circle cx="292.1" cy="30.3" r="1.4" fill="#a87050" opacity="0.85"/><circle cx="308.8" cy="39.6" r="0.9" fill="#a87050" opacity="0.85"/><circle cx="308.8" cy="52.7" r="0.8" fill="#c09070" opacity="0.85"/><circle cx="298.7" cy="22.7" r="1.2" fill="#5e4444" opacity="0.85"/><circle cx="302.1" cy="30.5" r="1.0" fill="#9a6448" opacity="0.85"/><circle cx="301.0" cy="44.0" r="1.5" fill="#c09070" opacity="0.85"/><circle cx="315.7" cy="34.4" r="0.7" fill="#c09070" opacity="0.85"/><circle cx="305.9" cy="21.2" r="0.9" fill="#a87050" opacity="0.85"/><circle cx="297.3" cy="29.1" r="1.4" fill="#9a6448" opacity="0.85"/><circle cx="323.6" cy="20.4" r="1.1" fill="#b07a58" opacity="0.85"/><circle cx="289.3" cy="40.8" r="0.9" fill="#4a4a5a" opacity="0.85"/><circle cx="310.6" cy="52.2" r="1.3" fill="#c09070" opacity="0.85"/><circle cx="324.8" cy="41.0" r="1.7" fill="#9a6448" opacity="0.85"/><circle cx="291.4" cy="32.1" r="0.7" fill="#b07a58" opacity="0.85"/><circle cx="311.2" cy="39.8" r="1.7" fill="#b07a58" opacity="0.85"/><circle cx="316.7" cy="26.6" r="1.7" fill="#b07a58" opacity="0.85"/><circle cx="309.1" cy="20.3" r="0.7" fill="#b07a58" opacity="0.85"/><circle cx="316.9" cy="45.6" r="1.7" fill="#c09070" opacity="0.85"/><circle cx="318.5" cy="20.2" r="1.0" fill="#c09070" opacity="0.85"/><circle cx="313.4" cy="39.9" r="1.7" fill="#9a6448" opacity="0.85"/><circle cx="323.6" cy="30.1" r="1.4" fill="#9a6448" opacity="0.85"/><circle cx="301.7" cy="40.8" r="0.7" fill="#7a5448" opacity="0.85"/><circle cx="285.3" cy="29.3" r="1.1" fill="#4a4a5a" opacity="0.85"/><circle cx="283.9" cy="28.4" r="0.7" fill="#b07a58" opacity="0.85"/><circle cx="326.0" cy="34.2" r="1.8" fill="#c09070" opacity="0.85"/><circle cx="296.2" cy="31.8" r="1.0" fill="#7a5448" opacity="0.85"/><circle cx="317.1" cy="41.4" r="1.7" fill="#7a5448" opacity="0.85"/><circle cx="288.5" cy="36.3" r="1.6" fill="#a87050" opacity="0.85"/><circle cx="313.2" cy="34.0" r="1.2" fill="#c09070" opacity="0.85"/><circle cx="324.0" cy="34.9" r="1.1" fill="#9a6448" opacity="0.85"/><circle cx="304.1" cy="36.6" r="1.1" fill="#4a4a5a" opacity="0.85"/><circle cx="305.7" cy="35.0" r="0.9" fill="#4a4a5a" opacity="0.85"/><circle cx="321.7" cy="27.9" r="0.7" fill="#9a6448" opacity="0.85"/><circle cx="306.1" cy="34.5" r="1.0" fill="#9a6448" opacity="0.85"/><circle cx="294.5" cy="49.3" r="1.3" fill="#c09070" opacity="0.85"/><circle cx="287.9" cy="34.9" r="1.0" fill="#5e4444" opacity="0.85"/><circle cx="315.4" cy="45.1" r="1.3" fill="#a87050" opacity="0.85"/><circle cx="290.5" cy="28.3" r="1.0" fill="#a87050" opacity="0.85"/><circle cx="307.2" cy="53.2" r="1.6" fill="#c09070" opacity="0.85"/><circle cx="313.2" cy="45.4" r="1.8" fill="#5e4444" opacity="0.85"/><circle cx="307.0" cy="10.8" r="1.0" fill="#7a5448" opacity="0.85"/><circle cx="297.4" cy="27.6" r="1.7" fill="#5e4444" opacity="0.85"/><circle cx="293.7" cy="18.6" r="0.6" fill="#a87050" opacity="0.85"/><circle cx="290.6" cy="26.3" r="1.7" fill="#7a5448" opacity="0.85"/><circle cx="294.3" cy="17.2" r="1.4" fill="#a87050" opacity="0.85"/><circle cx="303.0" cy="48.6" r="1.4" fill="#a87050" opacity="0.85"/><circle cx="316.7" cy="36.3" r="1.4" fill="#9a6448" opacity="0.85"/><circle cx="291.3" cy="15.2" r="0.9" fill="#a87050" opacity="0.85"/><circle cx="316.1" cy="35.6" r="0.7" fill="#7a5448" opacity="0.85"/><circle cx="314.4" cy="14.7" r="0.9" fill="#c09070" opacity="0.85"/><circle cx="290.6" cy="31.6" r="1.3" fill="#9a6448" opacity="0.85"/><circle cx="289.8" cy="33.0" r="0.9" fill="#4a4a5a" opacity="0.85"/><circle cx="297.1" cy="18.5" r="1.7" fill="#c09070" opacity="0.85"/><circle cx="309.4" cy="51.6" r="1.6" fill="#c09070" opacity="0.85"/><circle cx="320.8" cy="22.9" r="1.6" fill="#c09070" opacity="0.85"/><circle cx="303.2" cy="43.9" r="1.7" fill="#9a6448" opacity="0.85"/><circle cx="309.8" cy="20.9" r="0.9" fill="#4a4a5a" opacity="0.85"/><circle cx="320.6" cy="34.3" r="1.0" fill="#4a4a5a" opacity="0.85"/><circle cx="293.8" cy="17.8" r="1.1" fill="#c09070" opacity="0.85"/><circle cx="319.4" cy="15.7" r="0.8" fill="#5e4444" opacity="0.85"/><circle cx="325.4" cy="29.7" r="1.0" fill="#b07a58" opacity="0.85"/><circle cx="290.1" cy="19.6" r="0.9" fill="#c09070" opacity="0.85"/><circle cx="299.4" cy="26.6" r="1.5" fill="#9a6448" opacity="0.85"/><circle cx="292.1" cy="37.5" r="1.1" fill="#4a4a5a" opacity="0.85"/><circle cx="316.6" cy="20.2" r="1.7" fill="#c09070" opacity="0.85"/><circle cx="314.3" cy="27.2" r="1.5" fill="#9a6448" opacity="0.85"/><circle cx="313.7" cy="33.3" r="1.6" fill="#b07a58" opacity="0.85"/><circle cx="307.1" cy="49.2" r="0.7" fill="#b07a58" opacity="0.85"/><circle cx="292.7" cy="30.8" r="0.9" fill="#b07a58" opacity="0.85"/><circle cx="316.2" cy="33.9" r="1.5" fill="#9a6448" opacity="0.85"/><circle cx="294.7" cy="50.5" r="1.7" fill="#5e4444" opacity="0.85"/><circle cx="288.6" cy="28.6" r="1.0" fill="#a87050" opacity="0.85"/><circle cx="306.9" cy="19.4" r="0.9" fill="#7a5448" opacity="0.85"/><circle cx="310.6" cy="31.7" r="0.7" fill="#c09070" opacity="0.85"/><circle cx="290.2" cy="28.7" r="1.5" fill="#b07a58" opacity="0.85"/><circle cx="299.9" cy="52.6" r="1.0" fill="#a87050" opacity="0.85"/><circle cx="302.3" cy="37.1" r="0.7" fill="#5e4444" opacity="0.85"/><circle cx="299.2" cy="51.6" r="1.6" fill="#7a5448" opacity="0.85"/><circle cx="292.9" cy="39.2" r="0.9" fill="#a87050" opacity="0.85"/><circle cx="310.4" cy="28.9" r="1.1" fill="#a87050" opacity="0.85"/><circle cx="306.5" cy="47.9" r="1.3" fill="#c09070" opacity="0.85"/><circle cx="322.1" cy="62.3" r="1.7" fill="#7a5448" opacity="0.85"/><circle cx="296.6" cy="64.3" r="1.2" fill="#b07a58" opacity="0.85"/><circle cx="318.6" cy="99.1" r="1.3" fill="#b07a58" opacity="0.85"/><circle cx="304.1" cy="67.0" r="1.5" fill="#c09070" opacity="0.85"/><circle cx="319.6" cy="65.8" r="1.6" fill="#9a6448" opacity="0.85"/><circle cx="309.0" cy="52.5" r="1.1" fill="#9a6448" opacity="0.85"/><circle cx="318.7" cy="68.1" r="0.9" fill="#9a6448" opacity="0.85"/><circle cx="311.3" cy="71.6" r="1.2" fill="#7a5448" opacity="0.85"/><circle cx="306.7" cy="76.1" r="1.1" fill="#7a5448" opacity="0.85"/><circle cx="313.7" cy="57.5" r="1.6" fill="#b07a58" opacity="0.85"/><circle cx="306.7" cy="50.6" r="0.7" fill="#c09070" opacity="0.85"/><circle cx="304.7" cy="66.2" r="1.3" fill="#a87050" opacity="0.85"/><circle cx="316.3" cy="72.9" r="1.1" fill="#a87050" opacity="0.85"/><circle cx="306.7" cy="62.7" r="0.9" fill="#c09070" opacity="0.85"/><circle cx="299.8" cy="73.9" r="1.0" fill="#c09070" opacity="0.85"/><circle cx="318.4" cy="83.3" r="0.9" fill="#4a4a5a" opacity="0.85"/><circle cx="309.8" cy="49.6" r="1.5" fill="#4a4a5a" opacity="0.85"/><circle cx="318.2" cy="62.1" r="1.5" fill="#c09070" opacity="0.85"/><circle cx="311.2" cy="85.6" r="1.4" fill="#b07a58" opacity="0.85"/><circle cx="303.4" cy="76.9" r="1.3" fill="#a87050" opacity="0.85"/><circle cx="320.8" cy="55.0" r="0.7" fill="#c09070" opacity="0.85"/><circle cx="297.2" cy="76.7" r="1.1" fill="#a87050" opacity="0.85"/><circle cx="307.0" cy="52.8" r="1.6" fill="#a87050" opacity="0.85"/><circle cx="315.3" cy="66.6" r="0.9" fill="#b07a58" opacity="0.85"/><circle cx="309.5" cy="43.2" r="1.4" fill="#c09070" opacity="0.85"/><circle cx="304.9" cy="75.9" r="1.0" fill="#7a5448" opacity="0.85"/><circle cx="313.5" cy="50.2" r="1.8" fill="#5e4444" opacity="0.85"/><circle cx="302.8" cy="64.7" r="1.6" fill="#5e4444" opacity="0.85"/><circle cx="312.8" cy="56.8" r="1.3" fill="#b07a58" opacity="0.85"/><circle cx="317.7" cy="59.6" r="1.7" fill="#c09070" opacity="0.85"/><circle cx="315.3" cy="68.2" r="1.3" fill="#4a4a5a" opacity="0.85"/><circle cx="314.8" cy="95.7" r="0.7" fill="#c09070" opacity="0.85"/><circle cx="309.8" cy="55.0" r="1.0" fill="#a87050" opacity="0.85"/><circle cx="311.9" cy="97.2" r="1.3" fill="#7a5448" opacity="0.85"/><circle cx="313.4" cy="76.0" r="1.5" fill="#7a5448" opacity="0.85"/><circle cx="305.8" cy="94.8" r="1.7" fill="#5e4444" opacity="0.85"/><circle cx="312.4" cy="54.4" r="1.7" fill="#5e4444" opacity="0.85"/><circle cx="318.3" cy="92.6" r="1.7" fill="#c09070" opacity="0.85"/><circle cx="296.8" cy="74.3" r="1.8" fill="#c09070" opacity="0.85"/><circle cx="319.6" cy="90.5" r="1.2" fill="#7a5448" opacity="0.85"/><circle cx="302.1" cy="65.0" r="0.6" fill="#5e4444" opacity="0.85"/><circle cx="303.6" cy="92.9" r="0.7" fill="#5e4444" opacity="0.85"/><circle cx="305.7" cy="68.5" r="1.0" fill="#b07a58" opacity="0.85"/><circle cx="305.9" cy="82.7" r="1.0" fill="#7a5448" opacity="0.85"/><circle cx="300.3" cy="70.1" r="1.1" fill="#a87050" opacity="0.85"/><circle cx="317.3" cy="85.5" r="1.6" fill="#7a5448" opacity="0.85"/><circle cx="312.0" cy="84.7" r="0.7" fill="#9a6448" opacity="0.85"/><circle cx="310.3" cy="68.3" r="0.8" fill="#9a6448" opacity="0.85"/><circle cx="298.7" cy="73.7" r="0.6" fill="#4a4a5a" opacity="0.85"/><circle cx="309.6" cy="88.7" r="1.3" fill="#5e4444" opacity="0.85"/><circle cx="309.1" cy="55.5" r="1.7" fill="#b07a58" opacity="0.85"/><circle cx="319.6" cy="51.3" r="0.6" fill="#4a4a5a" opacity="0.85"/><circle cx="314.0" cy="56.5" r="1.2" fill="#5e4444" opacity="0.85"/><circle cx="313.3" cy="86.0" r="1.3" fill="#b07a58" opacity="0.85"/><circle cx="302.8" cy="49.0" r="1.5" fill="#a87050" opacity="0.85"/><circle cx="315.1" cy="83.4" r="1.3" fill="#4a4a5a" opacity="0.85"/><circle cx="316.5" cy="87.7" r="1.4" fill="#b07a58" opacity="0.85"/><circle cx="313.1" cy="55.2" r="1.6" fill="#a87050" opacity="0.85"/><circle cx="307.0" cy="82.8" r="1.5" fill="#9a6448" opacity="0.85"/><circle cx="320.1" cy="51.1" r="1.5" fill="#c09070" opacity="0.85"/><circle cx="300.2" cy="65.9" r="0.7" fill="#9a6448" opacity="0.85"/><circle cx="300.4" cy="57.5" r="1.2" fill="#7a5448" opacity="0.85"/><circle cx="314.6" cy="66.3" r="0.7" fill="#9a6448" opacity="0.85"/><circle cx="322.5" cy="59.3" r="1.3" fill="#9a6448" opacity="0.85"/><circle cx="305.4" cy="50.3" r="1.0" fill="#a87050" opacity="0.85"/><circle cx="313.4" cy="58.1" r="0.6" fill="#b07a58" opacity="0.85"/><circle cx="306.9" cy="83.5" r="1.0" fill="#5e4444" opacity="0.85"/><circle cx="321.6" cy="73.7" r="1.1" fill="#b07a58" opacity="0.85"/><circle cx="311.4" cy="82.0" r="1.6" fill="#a87050" opacity="0.85"/><circle cx="308.9" cy="60.3" r="1.3" fill="#4a4a5a" opacity="0.85"/><circle cx="322.0" cy="52.8" r="1.1" fill="#c09070" opacity="0.85"/><circle cx="301.7" cy="71.9" r="1.1" fill="#7a5448" opacity="0.85"/><circle cx="311.0" cy="91.9" r="1.3" fill="#4a4a5a" opacity="0.85"/><circle cx="316.8" cy="46.0" r="0.9" fill="#5e4444" opacity="0.85"/><circle cx="311.1" cy="77.1" r="1.6" fill="#7a5448" opacity="0.85"/><circle cx="300.9" cy="77.9" r="1.0" fill="#4a4a5a" opacity="0.85"/><circle cx="301.8" cy="64.9" r="1.0" fill="#a87050" opacity="0.85"/><circle cx="321.5" cy="83.4" r="0.9" fill="#7a5448" opacity="0.85"/><circle cx="327.3" cy="70.4" r="1.6" fill="#9a6448" opacity="0.85"/><circle cx="321.0" cy="85.9" r="1.0" fill="#a87050" opacity="0.85"/><circle cx="303.1" cy="70.4" r="1.6" fill="#7a5448" opacity="0.85"/><circle cx="302.3" cy="95.0" r="1.2" fill="#9a6448" opacity="0.85"/><circle cx="318.1" cy="73.0" r="1.1" fill="#c09070" opacity="0.85"/><circle cx="312.1" cy="51.9" r="1.8" fill="#a87050" opacity="0.85"/><circle cx="302.1" cy="59.9" r="0.7" fill="#c09070" opacity="0.85"/><circle cx="317.1" cy="90.1" r="1.7" fill="#c09070" opacity="0.85"/><circle cx="296.5" cy="72.1" r="1.4" fill="#4a4a5a" opacity="0.85"/><circle cx="305.7" cy="91.5" r="1.4" fill="#9a6448" opacity="0.85"/><circle cx="325.6" cy="74.0" r="1.7" fill="#7a5448" opacity="0.85"/><circle cx="324.5" cy="83.6" r="1.0" fill="#7a5448" opacity="0.85"/><circle cx="296.4" cy="67.7" r="0.8" fill="#b07a58" opacity="0.85"/><circle cx="317.4" cy="48.5" r="1.5" fill="#9a6448" opacity="0.85"/><circle cx="304.4" cy="93.2" r="1.5" fill="#4a4a5a" opacity="0.85"/><circle cx="312.8" cy="77.0" r="0.8" fill="#a87050" opacity="0.85"/><circle cx="302.3" cy="48.5" r="1.6" fill="#4a4a5a" opacity="0.85"/><circle cx="311.5" cy="55.1" r="0.7" fill="#9a6448" opacity="0.85"/><circle cx="315.1" cy="69.5" r="1.3" fill="#a87050" opacity="0.85"/><circle cx="321.4" cy="55.2" r="1.1" fill="#c09070" opacity="0.85"/><circle cx="316.5" cy="91.4" r="1.8" fill="#b07a58" opacity="0.85"/><circle cx="305.0" cy="63.6" r="0.8" fill="#9a6448" opacity="0.85"/><circle cx="318.3" cy="77.2" r="0.9" fill="#5e4444" opacity="0.85"/><circle cx="324.0" cy="62.4" r="0.7" fill="#c09070" opacity="0.85"/><circle cx="305.9" cy="51.2" r="1.1" fill="#c09070" opacity="0.85"/><circle cx="311.4" cy="74.3" r="1.1" fill="#7a5448" opacity="0.85"/><circle cx="303.3" cy="86.6" r="0.7" fill="#9a6448" opacity="0.85"/><circle cx="304.1" cy="90.1" r="1.3" fill="#a87050" opacity="0.85"/><circle cx="319.3" cy="90.5" r="1.7" fill="#b07a58" opacity="0.85"/><circle cx="312.5" cy="75.1" r="1.4" fill="#c09070" opacity="0.85"/><circle cx="304.8" cy="66.2" r="0.8" fill="#c09070" opacity="0.85"/><circle cx="323.4" cy="77.9" r="1.8" fill="#b07a58" opacity="0.85"/><circle cx="316.1" cy="91.1" r="1.6" fill="#7a5448" opacity="0.85"/><circle cx="307.4" cy="80.5" r="1.0" fill="#9a6448" opacity="0.85"/><circle cx="309.5" cy="78.3" r="0.9" fill="#7a5448" opacity="0.85"/><circle cx="314.6" cy="73.2" r="1.7" fill="#a87050" opacity="0.85"/><circle cx="320.3" cy="92.0" r="0.8" fill="#5e4444" opacity="0.85"/><circle cx="299.7" cy="54.9" r="0.6" fill="#9a6448" opacity="0.85"/><circle cx="312.9" cy="84.6" r="1.1" fill="#a87050" opacity="0.85"/><circle cx="315.9" cy="94.9" r="0.8" fill="#b07a58" opacity="0.85"/><circle cx="318.6" cy="48.3" r="1.1" fill="#a87050" opacity="0.85"/><circle cx="301.6" cy="63.1" r="1.1" fill="#a87050" opacity="0.85"/><circle cx="306.4" cy="99.9" r="0.6" fill="#4a4a5a" opacity="0.85"/><circle cx="311.2" cy="74.5" r="1.7" fill="#7a5448" opacity="0.85"/><circle cx="317.1" cy="59.0" r="0.9" fill="#c09070" opacity="0.85"/><circle cx="318.7" cy="85.7" r="1.4" fill="#5e4444" opacity="0.85"/><circle cx="316.7" cy="67.5" r="1.4" fill="#5e4444" opacity="0.85"/><circle cx="310.1" cy="87.9" r="1.5" fill="#4a4a5a" opacity="0.85"/><circle cx="323.1" cy="87.0" r="1.4" fill="#c09070" opacity="0.85"/><circle cx="300.4" cy="89.2" r="1.5" fill="#9a6448" opacity="0.85"/><circle cx="306.8" cy="68.3" r="1.1" fill="#c09070" opacity="0.85"/><circle cx="303.9" cy="89.8" r="1.8" fill="#7a5448" opacity="0.85"/><circle cx="318.5" cy="61.9" r="0.9" fill="#a87050" opacity="0.85"/><circle cx="303.3" cy="47.6" r="0.8" fill="#a87050" opacity="0.85"/><circle cx="307.2" cy="72.2" r="1.5" fill="#c09070" opacity="0.85"/><circle cx="323.7" cy="81.1" r="0.9" fill="#5e4444" opacity="0.85"/><circle cx="321.6" cy="66.8" r="0.9" fill="#c09070" opacity="0.85"/><circle cx="321.9" cy="48.7" r="0.9" fill="#5e4444" opacity="0.85"/><circle cx="299.6" cy="71.1" r="1.3" fill="#5e4444" opacity="0.85"/><circle cx="315.8" cy="93.2" r="1.0" fill="#9a6448" opacity="0.85"/><circle cx="321.9" cy="88.5" r="1.4" fill="#c09070" opacity="0.85"/><circle cx="309.5" cy="101.5" r="1.4" fill="#9a6448" opacity="0.85"/><circle cx="298.1" cy="84.0" r="1.6" fill="#b07a58" opacity="0.85"/><circle cx="309.5" cy="44.6" r="1.7" fill="#a87050" opacity="0.85"/><circle cx="310.6" cy="94.3" r="0.9" fill="#c09070" opacity="0.85"/><circle cx="311.4" cy="51.6" r="1.4" fill="#b07a58" opacity="0.85"/><circle cx="323.1" cy="59.6" r="1.8" fill="#b07a58" opacity="0.85"/><circle cx="307.2" cy="63.9" r="0.6" fill="#a87050" opacity="0.85"/><circle cx="318.6" cy="53.6" r="0.8" fill="#c09070" opacity="0.85"/><circle cx="304.8" cy="45.7" r="0.7" fill="#9a6448" opacity="0.85"/><circle cx="317.5" cy="67.5" r="1.4" fill="#5e4444" opacity="0.85"/><circle cx="307.2" cy="51.7" r="1.6" fill="#5e4444" opacity="0.85"/><circle cx="315.6" cy="69.4" r="1.4" fill="#a87050" opacity="0.85"/><circle cx="312.4" cy="77.1" r="0.8" fill="#9a6448" opacity="0.85"/><circle cx="317.0" cy="87.0" r="0.7" fill="#c09070" opacity="0.85"/><circle cx="316.2" cy="56.3" r="0.7" fill="#c09070" opacity="0.85"/><circle cx="306.3" cy="57.2" r="1.1" fill="#c09070" opacity="0.85"/><circle cx="299.1" cy="58.3" r="1.4" fill="#5e4444" opacity="0.85"/><circle cx="308.8" cy="97.7" r="1.4" fill="#a87050" opacity="0.85"/><circle cx="314.6" cy="91.3" r="1.6" fill="#a87050" opacity="0.85"/><circle cx="302.8" cy="59.2" r="1.2" fill="#9a6448" opacity="0.85"/><circle cx="302.7" cy="67.6" r="1.0" fill="#9a6448" opacity="0.85"/><circle cx="326.2" cy="70.4" r="0.9" fill="#a87050" opacity="0.85"/><circle cx="303.9" cy="59.8" r="0.9" fill="#c09070" opacity="0.85"/><circle cx="302.0" cy="73.9" r="1.2" fill="#5e4444" opacity="0.85"/><circle cx="316.8" cy="77.0" r="1.4" fill="#7a5448" opacity="0.85"/><circle cx="323.6" cy="83.8" r="0.8" fill="#b07a58" opacity="0.85"/><circle cx="307.5" cy="68.1" r="0.9" fill="#b07a58" opacity="0.85"/><circle cx="303.8" cy="77.6" r="1.0" fill="#b07a58" opacity="0.85"/><circle cx="311.9" cy="70.3" r="0.8" fill="#b07a58" opacity="0.85"/><circle cx="316.0" cy="80.2" r="1.7" fill="#c09070" opacity="0.85"/><circle cx="310.8" cy="49.5" r="0.8" fill="#5e4444" opacity="0.85"/><circle cx="300.3" cy="79.8" r="0.7" fill="#9a6448" opacity="0.85"/><circle cx="308.9" cy="81.8" r="1.5" fill="#9a6448" opacity="0.85"/><circle cx="297.1" cy="62.3" r="1.0" fill="#a87050" opacity="0.85"/><circle cx="323.5" cy="56.4" r="0.8" fill="#9a6448" opacity="0.85"/><circle cx="317.7" cy="65.3" r="1.2" fill="#5e4444" opacity="0.85"/><circle cx="318.3" cy="65.2" r="1.4" fill="#9a6448" opacity="0.85"/><circle cx="306.5" cy="77.8" r="1.1" fill="#b07a58" opacity="0.85"/><circle cx="306.2" cy="95.1" r="1.7" fill="#4a4a5a" opacity="0.85"/><circle cx="326.3" cy="67.6" r="0.9" fill="#4a4a5a" opacity="0.85"/><circle cx="268.8" cy="23.2" r="1.6" fill="#b07a58" opacity="0.85"/><circle cx="284.1" cy="32.3" r="1.6" fill="#7a5448" opacity="0.85"/><circle cx="279.6" cy="17.3" r="1.0" fill="#a87050" opacity="0.85"/><circle cx="287.9" cy="18.9" r="0.9" fill="#9a6448" opacity="0.85"/><circle cx="282.7" cy="28.1" r="0.8" fill="#4a4a5a" opacity="0.85"/><circle cx="270.3" cy="30.4" r="1.2" fill="#b07a58" opacity="0.85"/><circle cx="276.6" cy="29.1" r="1.8" fill="#7a5448" opacity="0.85"/><circle cx="280.0" cy="29.0" r="1.2" fill="#7a5448" opacity="0.85"/><circle cx="272.0" cy="20.3" r="1.3" fill="#4a4a5a" opacity="0.85"/><circle cx="287.5" cy="24.8" r="1.4" fill="#5e4444" opacity="0.85"/><circle cx="289.0" cy="21.3" r="0.7" fill="#5e4444" opacity="0.85"/><circle cx="275.7" cy="30.7" r="1.6" fill="#4a4a5a" opacity="0.85"/><circle cx="278.2" cy="22.4" r="0.9" fill="#c09070" opacity="0.85"/><circle cx="276.2" cy="22.1" r="1.0" fill="#9a6448" opacity="0.85"/><circle cx="284.9" cy="25.2" r="1.7" fill="#7a5448" opacity="0.85"/><circle cx="277.0" cy="28.4" r="0.8" fill="#c09070" opacity="0.85"/><circle cx="270.7" cy="24.5" r="1.2" fill="#4a4a5a" opacity="0.85"/><circle cx="280.3" cy="21.3" r="1.7" fill="#5e4444" opacity="0.85"/><circle cx="276.4" cy="16.8" r="1.6" fill="#a87050" opacity="0.85"/><circle cx="282.3" cy="20.8" r="1.2" fill="#b07a58" opacity="0.85"/><circle cx="273.1" cy="19.1" r="1.0" fill="#b07a58" opacity="0.85"/><circle cx="287.7" cy="26.5" r="0.7" fill="#c09070" opacity="0.85"/><circle cx="278.8" cy="25.3" r="1.1" fill="#7a5448" opacity="0.85"/><circle cx="273.2" cy="26.4" r="1.2" fill="#a87050" opacity="0.85"/><circle cx="272.8" cy="33.8" r="1.0" fill="#4a4a5a" opacity="0.85"/><circle cx="286.1" cy="20.4" r="0.8" fill="#4a4a5a" opacity="0.85"/><circle cx="276.5" cy="22.9" r="1.4" fill="#7a5448" opacity="0.85"/><circle cx="286.4" cy="29.5" r="0.8" fill="#5e4444" opacity="0.85"/><circle cx="270.0" cy="21.5" r="1.7" fill="#4a4a5a" opacity="0.85"/><circle cx="277.8" cy="26.5" r="0.8" fill="#5e4444" opacity="0.85"/><circle cx="277.7" cy="22.5" r="1.2" fill="#a87050" opacity="0.85"/><circle cx="283.6" cy="17.9" r="1.7" fill="#7a5448" opacity="0.85"/><circle cx="270.3" cy="22.2" r="1.6" fill="#9a6448" opacity="0.85"/><circle cx="284.3" cy="18.1" r="1.6" fill="#4a4a5a" opacity="0.85"/><circle cx="277.1" cy="32.2" r="1.2" fill="#7a5448" opacity="0.85"/><circle cx="271.5" cy="22.4" r="1.3" fill="#9a6448" opacity="0.85"/><circle cx="286.1" cy="18.6" r="0.6" fill="#7a5448" opacity="0.85"/><circle cx="271.8" cy="32.6" r="0.9" fill="#5e4444" opacity="0.85"/><circle cx="278.9" cy="34.7" r="1.3" fill="#c09070" opacity="0.85"/><circle cx="282.9" cy="31.2" r="1.4" fill="#a87050" opacity="0.85"/><circle cx="274.1" cy="27.2" r="1.4" fill="#9a6448" opacity="0.85"/><circle cx="271.1" cy="23.7" r="1.3" fill="#7a5448" opacity="0.85"/><circle cx="279.4" cy="25.7" r="1.8" fill="#4a4a5a" opacity="0.85"/><circle cx="274.5" cy="19.6" r="1.2" fill="#c09070" opacity="0.85"/><circle cx="285.0" cy="25.4" r="1.5" fill="#4a4a5a" opacity="0.85"/><circle cx="270.8" cy="26.3" r="1.4" fill="#5e4444" opacity="0.85"/><circle cx="283.0" cy="30.1" r="1.7" fill="#9a6448" opacity="0.85"/><circle cx="275.8" cy="26.6" r="1.0" fill="#b07a58" opacity="0.85"/><circle cx="277.6" cy="35.0" r="1.2" fill="#5e4444" opacity="0.85"/><circle cx="272.5" cy="28.6" r="1.2" fill="#5e4444" opacity="0.85"/><circle cx="312.9" cy="98.3" r="1.7" fill="#5e4444" opacity="0.85"/><circle cx="322.3" cy="109.0" r="0.8" fill="#7a5448" opacity="0.85"/><circle cx="303.2" cy="119.8" r="0.6" fill="#9a6448" opacity="0.85"/><circle cx="319.7" cy="102.0" r="0.9" fill="#5e4444" opacity="0.85"/><circle cx="318.3" cy="114.1" r="1.0" fill="#5e4444" opacity="0.85"/><circle cx="310.8" cy="107.3" r="1.4" fill="#7a5448" opacity="0.85"/><circle cx="305.4" cy="117.7" r="0.7" fill="#9a6448" opacity="0.85"/><circle cx="297.7" cy="118.0" r="0.8" fill="#4a4a5a" opacity="0.85"/><circle cx="311.1" cy="106.4" r="0.8" fill="#5e4444" opacity="0.85"/><circle cx="305.6" cy="113.1" r="1.6" fill="#9a6448" opacity="0.85"/><circle cx="301.5" cy="115.5" r="1.2" fill="#4a4a5a" opacity="0.85"/><circle cx="324.2" cy="108.2" r="0.7" fill="#5e4444" opacity="0.85"/><circle cx="298.2" cy="100.4" r="1.7" fill="#b07a58" opacity="0.85"/><circle cx="315.2" cy="102.8" r="1.7" fill="#b07a58" opacity="0.85"/><circle cx="316.0" cy="119.6" r="1.1" fill="#4a4a5a" opacity="0.85"/><circle cx="302.8" cy="106.1" r="0.7" fill="#a87050" opacity="0.85"/><circle cx="317.1" cy="101.3" r="0.7" fill="#5e4444" opacity="0.85"/><circle cx="321.5" cy="102.6" r="1.1" fill="#9a6448" opacity="0.85"/><circle cx="298.8" cy="101.8" r="0.7" fill="#b07a58" opacity="0.85"/><circle cx="300.5" cy="120.8" r="1.1" fill="#a87050" opacity="0.85"/><circle cx="313.1" cy="113.7" r="1.1" fill="#7a5448" opacity="0.85"/><circle cx="306.2" cy="130.6" r="1.2" fill="#5e4444" opacity="0.85"/><circle cx="322.2" cy="113.7" r="1.0" fill="#a87050" opacity="0.85"/><circle cx="311.3" cy="106.2" r="1.3" fill="#9a6448" opacity="0.85"/><circle cx="307.6" cy="122.5" r="0.7" fill="#9a6448" opacity="0.85"/><circle cx="313.8" cy="97.4" r="1.5" fill="#9a6448" opacity="0.85"/><circle cx="303.6" cy="122.3" r="1.2" fill="#9a6448" opacity="0.85"/><circle cx="301.7" cy="118.2" r="1.6" fill="#c09070" opacity="0.85"/><circle cx="301.2" cy="112.5" r="1.5" fill="#7a5448" opacity="0.85"/><circle cx="298.6" cy="124.5" r="1.4" fill="#4a4a5a" opacity="0.85"/><circle cx="308.1" cy="95.8" r="1.2" fill="#7a5448" opacity="0.85"/><circle cx="321.0" cy="101.0" r="1.2" fill="#4a4a5a" opacity="0.85"/><circle cx="322.1" cy="103.4" r="1.6" fill="#7a5448" opacity="0.85"/><circle cx="298.3" cy="101.0" r="0.7" fill="#a87050" opacity="0.85"/><circle cx="310.9" cy="113.3" r="1.3" fill="#7a5448" opacity="0.85"/><circle cx="308.2" cy="130.8" r="1.5" fill="#9a6448" opacity="0.85"/><circle cx="309.2" cy="101.0" r="1.7" fill="#9a6448" opacity="0.85"/><circle cx="303.3" cy="128.7" r="1.1" fill="#c09070" opacity="0.85"/><circle cx="311.3" cy="101.7" r="0.7" fill="#c09070" opacity="0.85"/><circle cx="295.9" cy="116.6" r="1.3" fill="#c09070" opacity="0.85"/><circle cx="307.3" cy="111.4" r="1.2" fill="#5e4444" opacity="0.85"/><circle cx="315.5" cy="125.4" r="1.1" fill="#a87050" opacity="0.85"/><circle cx="317.1" cy="121.4" r="0.9" fill="#c09070" opacity="0.85"/><circle cx="303.6" cy="111.9" r="1.1" fill="#7a5448" opacity="0.85"/><circle cx="300.2" cy="114.2" r="1.3" fill="#9a6448" opacity="0.85"/><circle cx="323.0" cy="104.0" r="1.6" fill="#b07a58" opacity="0.85"/><circle cx="308.2" cy="103.4" r="1.7" fill="#a87050" opacity="0.85"/><circle cx="303.0" cy="104.7" r="1.8" fill="#5e4444" opacity="0.85"/><circle cx="306.9" cy="106.1" r="1.7" fill="#c09070" opacity="0.85"/><circle cx="323.9" cy="106.2" r="1.4" fill="#9a6448" opacity="0.85"/><circle cx="310.6" cy="129.7" r="1.7" fill="#5e4444" opacity="0.85"/><circle cx="300.5" cy="108.0" r="0.9" fill="#c09070" opacity="0.85"/><circle cx="305.3" cy="108.5" r="1.0" fill="#7a5448" opacity="0.85"/><circle cx="311.2" cy="92.5" r="1.3" fill="#c09070" opacity="0.85"/><circle cx="304.6" cy="126.3" r="0.8" fill="#b07a58" opacity="0.85"/><circle cx="316.0" cy="127.3" r="0.7" fill="#9a6448" opacity="0.85"/><circle cx="322.3" cy="103.7" r="1.6" fill="#4a4a5a" opacity="0.85"/><circle cx="303.8" cy="126.2" r="1.7" fill="#4a4a5a" opacity="0.85"/><circle cx="309.9" cy="107.1" r="1.1" fill="#7a5448" opacity="0.85"/><circle cx="308.7" cy="98.1" r="1.7" fill="#c09070" opacity="0.85"/><circle cx="298.4" cy="117.4" r="1.4" fill="#c09070" opacity="0.85"/><circle cx="306.7" cy="113.9" r="1.8" fill="#4a4a5a" opacity="0.85"/><circle cx="320.3" cy="102.0" r="1.6" fill="#a87050" opacity="0.85"/><circle cx="315.4" cy="109.3" r="1.1" fill="#4a4a5a" opacity="0.85"/><circle cx="305.3" cy="110.0" r="0.6" fill="#a87050" opacity="0.85"/><circle cx="322.0" cy="103.1" r="0.8" fill="#a87050" opacity="0.85"/><circle cx="314.9" cy="98.1" r="0.8" fill="#4a4a5a" opacity="0.85"/><circle cx="323.9" cy="114.4" r="1.3" fill="#c09070" opacity="0.85"/><circle cx="307.8" cy="119.8" r="0.7" fill="#c09070" opacity="0.85"/><circle cx="321.0" cy="119.1" r="0.7" fill="#c09070" opacity="0.85"/><circle cx="306.7" cy="110.6" r="1.2" fill="#a87050" opacity="0.85"/><circle cx="315.2" cy="93.7" r="1.6" fill="#a87050" opacity="0.85"/><circle cx="308.2" cy="112.6" r="1.3" fill="#c09070" opacity="0.85"/><circle cx="316.6" cy="128.0" r="1.0" fill="#9a6448" opacity="0.85"/><circle cx="323.7" cy="112.5" r="1.3" fill="#a87050" opacity="0.85"/><circle cx="298.5" cy="101.8" r="1.5" fill="#b07a58" opacity="0.85"/><circle cx="296.2" cy="116.4" r="1.1" fill="#9a6448" opacity="0.85"/><circle cx="296.5" cy="105.6" r="0.7" fill="#7a5448" opacity="0.85"/><circle cx="303.8" cy="118.4" r="1.4" fill="#9a6448" opacity="0.85"/><circle cx="298.5" cy="104.1" r="1.5" fill="#9a6448" opacity="0.85"/><circle cx="302.0" cy="104.5" r="1.6" fill="#5e4444" opacity="0.85"/><circle cx="301.0" cy="100.6" r="1.3" fill="#5e4444" opacity="0.85"/><circle cx="310.3" cy="114.4" r="1.0" fill="#c09070" opacity="0.85"/><circle cx="307.3" cy="125.5" r="1.2" fill="#5e4444" opacity="0.85"/><circle cx="307.1" cy="100.7" r="1.1" fill="#5e4444" opacity="0.85"/><circle cx="322.6" cy="106.8" r="1.6" fill="#7a5448" opacity="0.85"/><circle cx="315.6" cy="120.3" r="1.1" fill="#5e4444" opacity="0.85"/><circle cx="318.9" cy="124.6" r="1.6" fill="#7a5448" opacity="0.85"/><circle cx="310.9" cy="104.2" r="1.3" fill="#7a5448" opacity="0.85"/><circle cx="300.5" cy="117.1" r="1.1" fill="#5e4444" opacity="0.85"/><circle cx="313.9" cy="7.7" r="1.6" fill="#a87050" opacity="0.85"/><circle cx="321.0" cy="1.8" r="0.6" fill="#9a6448" opacity="0.85"/><circle cx="318.9" cy="12.3" r="1.2" fill="#5e4444" opacity="0.85"/><circle cx="322.5" cy="1.5" r="1.2" fill="#b07a58" opacity="0.85"/><circle cx="323.9" cy="3.1" r="0.9" fill="#4a4a5a" opacity="0.85"/><circle cx="314.1" cy="12.8" r="1.4" fill="#a87050" opacity="0.85"/><circle cx="324.3" cy="12.5" r="0.7" fill="#c09070" opacity="0.85"/><circle cx="316.9" cy="2.0" r="1.4" fill="#b07a58" opacity="0.85"/><circle cx="325.0" cy="10.8" r="1.4" fill="#a87050" opacity="0.85"/><circle cx="321.5" cy="3.6" r="1.0" fill="#5e4444" opacity="0.85"/><circle cx="323.6" cy="9.4" r="1.5" fill="#c09070" opacity="0.85"/><circle cx="322.6" cy="8.0" r="0.8" fill="#a87050" opacity="0.85"/><circle cx="314.6" cy="14.2" r="1.2" fill="#a87050" opacity="0.85"/><circle cx="310.7" cy="7.3" r="1.5" fill="#c09070" opacity="0.85"/><circle cx="321.6" cy="5.0" r="1.4" fill="#5e4444" opacity="0.85"/><circle cx="320.1" cy="15.4" r="0.7" fill="#9a6448" opacity="0.85"/><circle cx="318.1" cy="0.1" r="1.2" fill="#9a6448" opacity="0.85"/><circle cx="310.5" cy="9.3" r="1.3" fill="#5e4444" opacity="0.85"/><circle cx="312.4" cy="2.6" r="0.9" fill="#b07a58" opacity="0.85"/><circle cx="318.9" cy="8.5" r="1.4" fill="#b07a58" opacity="0.85"/><circle cx="312.8" cy="8.2" r="1.0" fill="#5e4444" opacity="0.85"/><circle cx="316.8" cy="11.3" r="1.0" fill="#a87050" opacity="0.85"/><circle cx="324.1" cy="9.2" r="1.5" fill="#9a6448" opacity="0.85"/><circle cx="318.1" cy="10.8" r="0.9" fill="#4a4a5a" opacity="0.85"/><circle cx="321.4" cy="2.1" r="0.8" fill="#b07a58" opacity="0.85"/><path d="M268 46 Q282 40 291 48 L294 62 L296 100 L266 101 L263 82 L265 58 Z" fill="#0c0f18"/><path d="M268 52 L262 70 L256 92 L261 94 L267 74 L272 58 Z" fill="#0c0f18"/><path d="M270 55 L276 52 M268 70 L280 68 M266 85 L284 83 M282 60 L290 58" stroke="#5a6070" stroke-width="1.2" opacity="0.8"/><rect x="253" y="91" width="8" height="9" rx="2" fill="#2a40c8"/><path d="M265 100 L295 100 L300 122 L306 154 L296 156 L279 130 L269 159 L258 159 L262 125 Z" fill="#223e56"/><rect x="288" y="102" width="6" height="8" rx="2" fill="#b07a6a"/><ellipse cx="276.5" cy="39" rx="5.5" ry="6.5" fill="#b08878"/><path d="M269 36 Q271 30 277 30 Q284 31 283.5 40 L280 38 L272 37 Z" fill="#141414"/><path d="M266.5 41 L271 41 L272 47 L268 48 Z" fill="#d8d8d8"/><path d="M248 158 L267 158 L267 166 L248 166 Z" fill="#2a2a22"/><rect x="248" y="164" width="20" height="2" fill="#e8e8e0"/><path d="M289 155 L305 154 L310 160 L310 166 L289 166 Z" fill="#2a2a22"/><rect x="289" y="164" width="22" height="2" fill="#e8e8e0"/><rect x="0" y="166" width="326" height="10" fill="#b4b2a8"/><rect x="0" y="175" width="326" height="1" fill="#8a8678"/><rect x="0" y="176" width="326" height="8" fill="#b09e78"/><rect x="0.0" y="177" width="13.2" height="7" fill="#b09070"/><rect x="14.2" y="177" width="15.0" height="7" fill="#b8a080"/><rect x="30.2" y="177" width="7.3" height="7" fill="#a89880"/><rect x="38.5" y="177" width="14.8" height="7" fill="#c0b498"/><rect x="54.2" y="177" width="13.5" height="7" fill="#c0b498"/><rect x="68.7" y="177" width="8.1" height="7" fill="#a89880"/><rect x="77.9" y="177" width="15.7" height="7" fill="#a89880"/><rect x="94.5" y="177" width="12.4" height="7" fill="#b8a080"/><rect x="108.0" y="177" width="9.5" height="7" fill="#c0b498"/><rect x="118.5" y="177" width="11.1" height="7" fill="#c0b498"/><rect x="130.5" y="177" width="16.2" height="7" fill="#a89880"/><rect x="147.7" y="177" width="8.6" height="7" fill="#b8a888"/><rect x="157.3" y="177" width="8.4" height="7" fill="#b8a080"/><rect x="166.7" y="177" width="11.4" height="7" fill="#c0b498"/><rect x="179.1" y="177" width="7.0" height="7" fill="#b8a888"/><rect x="187.2" y="177" width="9.1" height="7" fill="#c0b498"/><rect x="197.3" y="177" width="16.6" height="7" fill="#c0b498"/><rect x="214.9" y="177" width="15.7" height="7" fill="#b09070"/><rect x="231.6" y="177" width="10.1" height="7" fill="#c0b498"/><rect x="242.7" y="177" width="12.4" height="7" fill="#c0b498"/><rect x="256.1" y="177" width="8.8" height="7" fill="#c0b498"/><rect x="265.9" y="177" width="16.7" height="7" fill="#a89880"/><rect x="283.6" y="177" width="10.0" height="7" fill="#b09070"/><rect x="294.6" y="177" width="11.1" height="7" fill="#c0b498"/><rect x="306.7" y="177" width="9.6" height="7" fill="#b09070"/><rect x="317.4" y="177" width="10.0" height="7" fill="#b8a080"/></symbol>
<symbol id="sw" viewBox="0 0 8 8"><path d="M5.2 1.8 A2.9 2.9 0 1 1 2.6 1.7" fill="none" stroke="currentColor" stroke-width="1"/><path d="M3.6 0.6 L4.8 0.6 M6.2 1.6 L6.9 0.9" stroke="currentColor" stroke-width="0.9"/></symbol>
<symbol id="rst" viewBox="0 0 9 9"><path d="M3 2.2 A2.5 2.5 0 1 1 4.8 6.2" fill="none" stroke="currentColor" stroke-width="0.95"/><path d="M1.1 3.6 L3.7 2.3 L3.7 4.9 Z" fill="currentColor"/><path d="M2.3 7 L8.1 7" stroke="currentColor" stroke-width="0.9"/></symbol>
</defs></svg>

<div class="a" style="left:0px;top:0px;width:1007px;height:21px;background:#2c2c2c;"></div>
<div class="a" style="left:0px;top:0px;width:345px;height:21px;background:#292929;"></div>
<div class="a" style="left:648px;top:0px;width:1px;height:21px;background:#222;"></div>
<div class="a" style="left:664px;top:0px;width:343px;height:21px;background:#2f2f2f;"></div>
<svg class="a" style="left:656px;top:7px;" width="8" height="7" viewBox="0 0 8 7"><path d="M1 0.8 L3.2 3.5 L1 6.2 M4.2 0.8 L6.4 3.5 L4.2 6.2" fill="none" stroke="#d8d8d8" stroke-width="1.3"/></svg>
<svg class="a" style="left:8px;top:6px;" width="10" height="9" viewBox="0 0 10 9"><path d="M5 0 L10 4.5 L8.5 4.5 L8.5 9 L6 9 L6 6 L4 6 L4 9 L1.5 9 L1.5 4.5 L0 4.5 Z" fill="#d0d0d0"/></svg>
<div class="t" style="left:352px;top:5px;color:#a8a8a8;font-size:7px;">学习</div>
<div class="t" style="left:390px;top:5px;color:#a8a8a8;font-size:7px;">组件</div>
<div class="t" style="left:427px;top:5px;color:#3196f0;font-size:7px;">编辑</div>
<div class="t" style="left:449px;top:5px;color:#3196f0;font-size:7px;">≡</div>
<div class="t" style="left:465px;top:5px;color:#a8a8a8;font-size:7px;">颜色</div>
<div class="t" style="left:503px;top:5px;color:#a8a8a8;font-size:7px;">效果</div>
<div class="t" style="left:541px;top:5px;color:#a8a8a8;font-size:7px;">音频</div>
<div class="t" style="left:578px;top:5px;color:#a8a8a8;font-size:7px;">图形</div>
<div class="t" style="left:617px;top:5px;color:#a8a8a8;font-size:7px;">库</div>
<div class="a" style="left:0px;top:22px;width:334px;height:258px;background:#2b2b2b;"></div>
<div class="t" style="left:5px;top:26px;color:#909090;font-size:7.5px;">源<span style="font-size:6.5px">:</span> 视频素材<b class="lp">（</b>总<b class="rp">）</b><span style="font-size:6.5px">.mp4</span></div>
<div class="t" style="left:101px;top:26px;color:#d0d0d0;font-size:7.5px;">效果控件</div>
<div class="t" style="left:134px;top:26px;color:#d0d0d0;font-size:7px;">≡</div>
<div class="a" style="left:100px;top:35px;width:39px;height:2px;background:#a0a0a0;"></div>
<div class="t" style="left:151px;top:26px;color:#909090;font-size:7.5px;">音频剪辑混合器<span style="font-size:6.5px">:</span> 视频素材<b class="lp">（</b>总<b class="rp">）</b></div>
<div class="t" style="left:272px;top:26px;color:#909090;font-size:7.5px;">元数据</div>
<div class="a" style="left:2px;top:45px;width:247px;height:223px;background:#242424;"></div>
<div class="a" style="left:2px;top:45px;width:247px;height:11px;background:#2b2b2b;"></div>
<div class="a" style="left:92px;top:45px;width:137px;height:11px;background:#1f1f1f;"></div>
<div class="t" style="left:4px;top:46px;color:#8c8c8c;font-size:7.5px;">主要*视频素材<b class="lp">（</b>总<b class="rp">）</b><span style="font-size:6.5px">.mp4</span></div>
<svg class="a" style="left:95px;top:49px;" width="5" height="4" viewBox="0 0 5 4"><path d="M0.5 0.5 L2.5 2.8 L4.5 0.5" fill="none" stroke="#a0a0a0" stroke-width="0.9"/></svg>
<div class="t" style="left:103px;top:46px;color:#3196f0;font-size:7.5px;">视频素材<b class="lp">（</b>总<b class="rp">）</b> * 视频素材<b class="lp">（</b>总<b class="rp">）</b><span style="font-size:6.5px">.mp4</span></div>
<svg class="a" style="left:240px;top:48px;" width="4" height="6" viewBox="0 0 4 6"><path d="M0 0 L4 3 L0 6 Z" fill="#c0c0c0"/></svg>
<div class="a" style="left:2px;top:56px;width:247px;height:10px;background:#1d1d1d;"></div>
<div class="t" style="left:6px;top:57px;color:#a0a0a0;font-size:7.5px;">视频</div>
<svg class="a" style="left:241px;top:60px;" width="6" height="4" viewBox="0 0 6 4"><path d="M0.3 3.5 L3 0.5 L5.7 3.5 Z" fill="#c8c8c8"/></svg>
<div class="a" style="left:12px;top:78px;width:237px;height:1px;background:#2e2e2e;"></div>
<svg class="a" style="left:4px;top:71px;" width="5" height="4" viewBox="0 0 5 4"><path d="M0.5 0.5 L2.5 2.8 L4.5 0.5" fill="none" stroke="#a0a0a0" stroke-width="0.9"/></svg>
<div class="t" style="left:12px;top:68px;color:#a0a0a0;font-size:7px;"><i>fx</i></div>
<div class="t" style="left:23px;top:69px;color:#a8a8a8;font-size:7.5px;">运动</div>
<svg class="a" style="left:237px;top:68px;color:#c0c0c0" width="9" height="9" viewBox="0 0 9 9"><use href="#rst" width="9" height="9"/></svg>
<div class="a" style="left:12px;top:89px;width:237px;height:1px;background:#2e2e2e;"></div>
<svg class="a" style="left:20px;top:80px;color:#b0b0b0" width="8" height="8" viewBox="0 0 8 8"><use href="#sw" width="8" height="8"/></svg>
<div class="t" style="left:30px;top:80px;color:#a8a8a8;font-size:7.5px;">位置</div>
<div class="t" style="left:122px;top:80px;color:#3196f0;font-size:6px;"><span style="font-size:6px">960.0</span></div>
<div class="t" style="left:149px;top:80px;color:#3196f0;font-size:6px;"><span style="font-size:6px">540.0</span></div>
<svg class="a" style="left:237px;top:79px;color:#c0c0c0" width="9" height="9" viewBox="0 0 9 9"><use href="#rst" width="9" height="9"/></svg>
<div class="a" style="left:12px;top:100px;width:237px;height:1px;background:#2e2e2e;"></div>
<svg class="a" style="left:11px;top:93px;" width="4" height="5" viewBox="0 0 4 5"><path d="M0.5 0.5 L2.8 2.5 L0.5 4.5" fill="none" stroke="#909090" stroke-width="0.9"/></svg>
<svg class="a" style="left:20px;top:91px;color:#b0b0b0" width="8" height="8" viewBox="0 0 8 8"><use href="#sw" width="8" height="8"/></svg>
<div class="t" style="left:30px;top:91px;color:#a8a8a8;font-size:7.5px;">缩放</div>
<div class="t" style="left:122px;top:91px;color:#3196f0;font-size:6px;"><span style="font-size:6px">100.0</span></div>
<svg class="a" style="left:237px;top:90px;color:#c0c0c0" width="9" height="9" viewBox="0 0 9 9"><use href="#rst" width="9" height="9"/></svg>
<div class="a" style="left:12px;top:111px;width:237px;height:1px;background:#2e2e2e;"></div>
<svg class="a" style="left:11px;top:104px;" width="4" height="5" viewBox="0 0 4 5"><path d="M0.5 0.5 L2.8 2.5 L0.5 4.5" fill="none" stroke="#909090" stroke-width="0.9"/></svg>
<svg class="a" style="left:20px;top:102px;color:#555" width="8" height="8" viewBox="0 0 8 8"><use href="#sw" width="8" height="8"/></svg>
<div class="t" style="left:30px;top:102px;color:#666;font-size:7.5px;">缩放宽度</div>
<div class="t" style="left:122px;top:102px;color:#5a5a5a;font-size:6px;"><span style="font-size:6px">100.0</span></div>
<svg class="a" style="left:237px;top:101px;color:#c0c0c0" width="9" height="9" viewBox="0 0 9 9"><use href="#rst" width="9" height="9"/></svg>
<div class="a" style="left:12px;top:122px;width:237px;height:1px;background:#2e2e2e;"></div>
<svg class="a" style="left:237px;top:112px;color:#c0c0c0" width="9" height="9" viewBox="0 0 9 9"><use href="#rst" width="9" height="9"/></svg>
<div class="a" style="left:12px;top:133px;width:237px;height:1px;background:#2e2e2e;"></div>
<svg class="a" style="left:11px;top:126px;" width="4" height="5" viewBox="0 0 4 5"><path d="M0.5 0.5 L2.8 2.5 L0.5 4.5" fill="none" stroke="#909090" stroke-width="0.9"/></svg>
<svg class="a" style="left:20px;top:124px;color:#b0b0b0" width="8" height="8" viewBox="0 0 8 8"><use href="#sw" width="8" height="8"/></svg>
<div class="t" style="left:30px;top:124px;color:#a8a8a8;font-size:7.5px;">旋转</div>
<div class="t" style="left:122px;top:124px;color:#3196f0;font-size:6px;"><span style="font-size:6px">0.0</span></div>
<svg class="a" style="left:237px;top:123px;color:#c0c0c0" width="9" height="9" viewBox="0 0 9 9"><use href="#rst" width="9" height="9"/></svg>
<div class="a" style="left:12px;top:144px;width:237px;height:1px;background:#2e2e2e;"></div>
<svg class="a" style="left:20px;top:135px;color:#b0b0b0" width="8" height="8" viewBox="0 0 8 8"><use href="#sw" width="8" height="8"/></svg>
<div class="t" style="left:30px;top:135px;color:#a8a8a8;font-size:7.5px;">锚点</div>
<div class="t" style="left:122px;top:135px;color:#3196f0;font-size:6px;"><span style="font-size:6px">960.0</span></div>
<div class="t" style="left:149px;top:135px;color:#3196f0;font-size:6px;"><span style="font-size:6px">540.0</span></div>
<svg class="a" style="left:237px;top:134px;color:#c0c0c0" width="9" height="9" viewBox="0 0 9 9"><use href="#rst" width="9" height="9"/></svg>
<div class="a" style="left:12px;top:155px;width:237px;height:1px;background:#2e2e2e;"></div>
<svg class="a" style="left:11px;top:148px;" width="4" height="5" viewBox="0 0 4 5"><path d="M0.5 0.5 L2.8 2.5 L0.5 4.5" fill="none" stroke="#909090" stroke-width="0.9"/></svg>
<svg class="a" style="left:20px;top:146px;color:#b0b0b0" width="8" height="8" viewBox="0 0 8 8"><use href="#sw" width="8" height="8"/></svg>
<div class="t" style="left:30px;top:146px;color:#a8a8a8;font-size:7.5px;">防闪烁滤镜</div>
<div class="t" style="left:122px;top:146px;color:#3196f0;font-size:6px;"><span style="font-size:6px">0.00</span></div>
<svg class="a" style="left:237px;top:145px;color:#c0c0c0" width="9" height="9" viewBox="0 0 9 9"><use href="#rst" width="9" height="9"/></svg>
<div class="a" style="left:12px;top:166px;width:237px;height:1px;background:#2e2e2e;"></div>
<svg class="a" style="left:4px;top:159px;" width="5" height="4" viewBox="0 0 5 4"><path d="M0.5 0.5 L2.5 2.8 L4.5 0.5" fill="none" stroke="#a0a0a0" stroke-width="0.9"/></svg>
<div class="t" style="left:12px;top:156px;color:#a0a0a0;font-size:7px;"><i>fx</i></div>
<div class="t" style="left:23px;top:157px;color:#a8a8a8;font-size:7.5px;">不透明度</div>
<svg class="a" style="left:237px;top:156px;color:#c0c0c0" width="9" height="9" viewBox="0 0 9 9"><use href="#rst" width="9" height="9"/></svg>
<div class="a" style="left:12px;top:177px;width:237px;height:1px;background:#2e2e2e;"></div>
<div class="a" style="left:12px;top:188px;width:237px;height:1px;background:#2e2e2e;"></div>
<svg class="a" style="left:11px;top:181px;" width="4" height="5" viewBox="0 0 4 5"><path d="M0.5 0.5 L2.8 2.5 L0.5 4.5" fill="none" stroke="#909090" stroke-width="0.9"/></svg>
<svg class="a" style="left:20px;top:179px;color:#3196f0" width="8" height="8" viewBox="0 0 8 8"><use href="#sw" width="8" height="8"/></svg>
<div class="t" style="left:30px;top:179px;color:#a8a8a8;font-size:7.5px;">不透明度</div>
<div class="t" style="left:122px;top:179px;color:#3196f0;font-size:6px;"><span style="font-size:6px">100.0 %</span></div>
<svg class="a" style="left:237px;top:178px;color:#c0c0c0" width="9" height="9" viewBox="0 0 9 9"><use href="#rst" width="9" height="9"/></svg>
<div class="a" style="left:12px;top:199px;width:237px;height:1px;background:#2e2e2e;"></div>
<div class="t" style="left:30px;top:190px;color:#a8a8a8;font-size:7.5px;">混合模式</div>
<svg class="a" style="left:237px;top:189px;color:#c0c0c0" width="9" height="9" viewBox="0 0 9 9"><use href="#rst" width="9" height="9"/></svg>
<div class="a" style="left:12px;top:210px;width:237px;height:1px;background:#2e2e2e;"></div>
<svg class="a" style="left:4px;top:203px;" width="5" height="4" viewBox="0 0 5 4"><path d="M0.5 0.5 L2.5 2.8 L4.5 0.5" fill="none" stroke="#a0a0a0" stroke-width="0.9"/></svg>
<div class="t" style="left:12px;top:200px;color:#707070;font-size:7px;"><i>fx</i></div>
<div class="t" style="left:23px;top:201px;color:#a8a8a8;font-size:7.5px;">时间重映射</div>
<div class="a" style="left:12px;top:221px;width:237px;height:1px;background:#2e2e2e;"></div>
<svg class="a" style="left:11px;top:214px;" width="4" height="5" viewBox="0 0 4 5"><path d="M0.5 0.5 L2.8 2.5 L0.5 4.5" fill="none" stroke="#909090" stroke-width="0.9"/></svg>
<svg class="a" style="left:20px;top:212px;color:#3196f0" width="8" height="8" viewBox="0 0 8 8"><use href="#sw" width="8" height="8"/></svg>
<div class="t" style="left:30px;top:212px;color:#a8a8a8;font-size:7.5px;">速度</div>
<div class="t" style="left:122px;top:212px;color:#a0a0a0;font-size:6px;"><span style="font-size:6px">100.00%</span></div>
<div class="a" style="left:122px;top:114px;width:8px;height:7px;background:#a0a0a0;border-radius:1px"></div>
<svg class="a" style="left:123px;top:115px;" width="6" height="5" viewBox="0 0 6 5"><path d="M0.8 2.5 L2.3 4 L5.2 0.8" fill="none" stroke="#222" stroke-width="1.1"/></svg>
<div class="t" style="left:132px;top:113px;color:#a8a8a8;font-size:7.5px;">等比缩放</div>
<svg class="a" style="left:21px;top:168px;" width="40" height="9" viewBox="0 0 40 9"><ellipse cx="6" cy="4.5" rx="5" ry="3.2" fill="none" stroke="#b0b0b0" stroke-width="0.9"/><rect x="16.5" y="0.8" width="8" height="7" fill="none" stroke="#b0b0b0" stroke-width="0.9"/><path d="M31 8 L32 5 L37 0.5 L39 2.5 L34.5 7 Z" fill="#b0b0b0"/></svg>
<svg class="a" style="left:208px;top:180px;" width="24" height="7" viewBox="0 0 24 7"><path d="M4.5 0.8 L1.8 3.5 L4.5 6.2 Z" fill="#505050"/><circle cx="11.5" cy="3.5" r="1.8" fill="none" stroke="#909090" stroke-width="1"/><path d="M18.5 0.8 L21.2 3.5 L18.5 6.2 Z" fill="#505050"/></svg>
<svg class="a" style="left:208px;top:213px;" width="24" height="7" viewBox="0 0 24 7"><path d="M4.5 0.8 L1.8 3.5 L4.5 6.2 Z" fill="#505050"/><circle cx="11.5" cy="3.5" r="1.8" fill="#3196f0"/><path d="M18.5 0.3 L22 3.5 L18.5 6.7 Z" fill="#d8d8d8"/></svg>
<div class="a" style="left:122px;top:189px;width:73px;height:9px;background:#222;border:1px solid #303030"></div>
<div class="t" style="left:126px;top:190px;color:#b0b0b0;font-size:7.5px;">正常</div>
<svg class="a" style="left:188px;top:192px;" width="5" height="3" viewBox="0 0 5 3"><path d="M0.3 0.3 L2.5 2.5 L4.7 0.3" fill="none" stroke="#888" stroke-width="0.8"/></svg>
<div class="a" style="left:249px;top:45px;width:85px;height:223px;background:#2a2a2a;"></div>
<div class="a" style="left:249px;top:45px;width:1px;height:223px;background:#2a3f55;"></div>
<div class="t" style="left:251px;top:45px;color:#c8c8c8;font-size:6px;"><span style="font-size:6px">00:00</span></div>
<div class="t" style="left:292px;top:45px;color:#c8c8c8;font-size:6px;"><span style="font-size:6px">00:00:15:00</span></div>
<div class="a" style="left:252.0px;top:53px;width:1px;height:2px;background:#555;"></div>
<div class="a" style="left:257.3px;top:53px;width:1px;height:2px;background:#555;"></div>
<div class="a" style="left:262.6px;top:53px;width:1px;height:2px;background:#555;"></div>
<div class="a" style="left:267.9px;top:53px;width:1px;height:2px;background:#555;"></div>
<div class="a" style="left:273.2px;top:53px;width:1px;height:2px;background:#555;"></div>
<div class="a" style="left:278.5px;top:53px;width:1px;height:2px;background:#555;"></div>
<div class="a" style="left:283.8px;top:53px;width:1px;height:2px;background:#555;"></div>
<div class="a" style="left:289.1px;top:53px;width:1px;height:2px;background:#555;"></div>
<div class="a" style="left:294.4px;top:53px;width:1px;height:2px;background:#555;"></div>
<div class="a" style="left:299.7px;top:53px;width:1px;height:2px;background:#555;"></div>
<div class="a" style="left:305.0px;top:53px;width:1px;height:2px;background:#555;"></div>
<div class="a" style="left:310.3px;top:53px;width:1px;height:2px;background:#555;"></div>
<div class="a" style="left:315.6px;top:53px;width:1px;height:2px;background:#555;"></div>
<div class="a" style="left:320.9px;top:53px;width:1px;height:2px;background:#555;"></div>
<svg class="a" style="left:249px;top:47px;" width="5" height="8" viewBox="0 0 5 8"><path d="M0 0 L3.5 0 L3.5 5 L1.5 8 L0 8 Z" fill="#3196f0"/></svg>
<div class="a" style="left:250px;top:56px;width:75px;height:11px;background:#7aa2d6;"></div>
<div class="t" style="left:252px;top:57px;color:#1a1a1a;font-size:7.5px;">视频素材<b class="lp">（</b>总<b class="rp">）</b><span style="font-size:6.5px">.mp4</span></div>
<div class="a" style="left:253px;top:263px;width:69px;height:5px;background:#383838;"></div>
<svg class="a" style="left:249px;top:261px;" width="9" height="9" viewBox="0 0 9 9"><circle cx="4.5" cy="4.5" r="2.3" fill="#2b2b2b" stroke="#c0c0c0" stroke-width="0.9"/></svg>
<svg class="a" style="left:317px;top:261px;" width="9" height="9" viewBox="0 0 9 9"><circle cx="4.5" cy="4.5" r="2.3" fill="#2b2b2b" stroke="#c0c0c0" stroke-width="0.9"/></svg>
<div class="t" style="left:2px;top:270px;color:#3196f0;font-size:6px;"><span style="font-size:6px">00:00:00:00</span></div>
<svg class="a" style="left:301px;top:271px;" width="8" height="6" viewBox="0 0 8 6"><path d="M0 0.5 L3.5 3 L0 5.5 Z" fill="#5a5a5a"/><path d="M6 0 L6 5 L4 6" fill="none" stroke="#5a5a5a" stroke-width="0.9"/></svg>
<svg class="a" style="left:313px;top:270px;" width="10" height="8" viewBox="0 0 10 8"><path d="M0.5 3 L0.5 7.5 L9.5 7.5 L9.5 3" fill="none" stroke="#6a6a6a" stroke-width="0.9"/><path d="M4.5 6 L4.5 0.5 M2.5 2.5 L4.5 0.5 L6.5 2.5" fill="none" stroke="#6a6a6a" stroke-width="0.9"/></svg>
<div class="a" style="left:336px;top:22px;width:671px;height:258px;background:#2b2b2b;"></div>
<div class="t" style="left:343px;top:26px;color:#c8c8c8;font-size:7.5px;">节目<span style="font-size:6.5px">:</span> 视频素材<b class="lp">（</b>总<b class="rp">）</b></div>
<div class="t" style="left:412px;top:26px;color:#c8c8c8;font-size:7px;">≡</div>
<svg class="a" style="left:509px;top:44px" width="326" height="184"><use href="#scene" width="326" height="184"/></svg>
<div class="t" style="left:346px;top:231px;color:#3a9af0;font-size:7.5px;font-weight:bold"><span style="font-size:7.5px">00:00:00:00</span></div>
<div class="a" style="left:401px;top:231px;width:44px;height:9px;background:#222;border:1px solid #2e2e2e"></div>
<div class="t" style="left:405px;top:231px;color:#c8c8c8;font-size:7.5px;">适合</div>
<svg class="a" style="left:437px;top:234px;" width="5" height="3" viewBox="0 0 5 3"><path d="M0.3 0.3 L2.5 2.5 L4.7 0.3" fill="none" stroke="#aaa" stroke-width="0.8"/></svg>
<div class="a" style="left:888px;top:231px;width:45px;height:9px;background:#222;border:1px solid #2e2e2e"></div>
<div class="t" style="left:891px;top:231px;color:#c8c8c8;font-size:6.5px;"><span style="font-size:6.5px">1/2</span></div>
<svg class="a" style="left:926px;top:234px;" width="5" height="3" viewBox="0 0 5 3"><path d="M0.3 0.3 L2.5 2.5 L4.7 0.3" fill="none" stroke="#aaa" stroke-width="0.8"/></svg>
<svg class="a" style="left:938px;top:230px;" width="10" height="10" viewBox="0 0 10 10"><path d="M3.5 3.5 L7.8 7.8" stroke="#c8c8c8" stroke-width="1.7" stroke-linecap="round"/><circle cx="3" cy="3" r="2.3" fill="#c8c8c8"/><path d="M0.3 1.3 L1.9 2.9 L2.9 1.9 L1.3 0.3 Z" fill="#282828"/></svg>
<div class="t" style="left:952px;top:231px;color:#c0c0c0;font-size:7.5px;"><span style="font-size:7.5px">00:00:19:09</span></div>
<svg class="a" style="left:0;top:0" width="1007" height="494"><rect x="359.7" y="249.7" width="0.9" height="3" fill="#4a4a4a"/><rect x="376.7" y="249.7" width="0.9" height="3" fill="#4a4a4a"/><rect x="393.6" y="249.7" width="0.9" height="3" fill="#4a4a4a"/><rect x="410.6" y="249.7" width="0.9" height="3" fill="#4a4a4a"/><rect x="427.5" y="249.7" width="0.9" height="3" fill="#4a4a4a"/><rect x="444.4" y="249.7" width="0.9" height="3" fill="#4a4a4a"/><rect x="461.4" y="249.7" width="0.9" height="3" fill="#4a4a4a"/><rect x="478.3" y="249.7" width="0.9" height="3" fill="#4a4a4a"/><rect x="495.3" y="249.7" width="0.9" height="3" fill="#4a4a4a"/><rect x="512.2" y="247" width="0.9" height="5.7" fill="#4a4a4a"/><rect x="529.1" y="249.7" width="0.9" height="3" fill="#4a4a4a"/><rect x="546.1" y="249.7" width="0.9" height="3" fill="#4a4a4a"/><rect x="563.0" y="249.7" width="0.9" height="3" fill="#4a4a4a"/><rect x="580.0" y="249.7" width="0.9" height="3" fill="#4a4a4a"/><rect x="596.9" y="249.7" width="0.9" height="3" fill="#4a4a4a"/><rect x="613.8" y="249.7" width="0.9" height="3" fill="#4a4a4a"/><rect x="630.8" y="249.7" width="0.9" height="3" fill="#4a4a4a"/><rect x="647.7" y="249.7" width="0.9" height="3" fill="#4a4a4a"/><rect x="664.7" y="249.7" width="0.9" height="3" fill="#4a4a4a"/><rect x="681.6" y="247" width="0.9" height="5.7" fill="#4a4a4a"/><rect x="698.5" y="249.7" width="0.9" height="3" fill="#4a4a4a"/><rect x="715.5" y="249.7" width="0.9" height="3" fill="#4a4a4a"/><rect x="732.4" y="249.7" width="0.9" height="3" fill="#4a4a4a"/><rect x="749.4" y="249.7" width="0.9" height="3" fill="#4a4a4a"/><rect x="766.3" y="249.7" width="0.9" height="3" fill="#4a4a4a"/><rect x="783.2" y="249.7" width="0.9" height="3" fill="#4a4a4a"/><rect x="800.2" y="249.7" width="0.9" height="3" fill="#4a4a4a"/><rect x="817.1" y="249.7" width="0.9" height="3" fill="#4a4a4a"/><rect x="834.1" y="249.7" width="0.9" height="3" fill="#4a4a4a"/><rect x="851.0" y="247" width="0.9" height="5.7" fill="#4a4a4a"/><rect x="867.9" y="249.7" width="0.9" height="3" fill="#4a4a4a"/><rect x="884.9" y="249.7" width="0.9" height="3" fill="#4a4a4a"/><rect x="901.8" y="249.7" width="0.9" height="3" fill="#4a4a4a"/><rect x="918.8" y="249.7" width="0.9" height="3" fill="#4a4a4a"/><rect x="935.7" y="249.7" width="0.9" height="3" fill="#4a4a4a"/><rect x="952.6" y="249.7" width="0.9" height="3" fill="#4a4a4a"/><rect x="969.6" y="249.7" width="0.9" height="3" fill="#4a4a4a"/><rect x="986.5" y="249.7" width="0.9" height="3" fill="#4a4a4a"/></svg>
<div class="a" style="left:344px;top:253px;width:653px;height:6px;background:#363636;"></div>
<svg class="a" style="left:342px;top:245px;" width="5" height="7" viewBox="0 0 5 7"><path d="M0.5 0 L4 0 L4 5 L2.2 7 L0.5 5 Z" fill="#3196f0"/></svg>
<svg class="a" style="left:342px;top:252px;" width="9" height="8" viewBox="0 0 9 8"><circle cx="4.5" cy="4" r="2.3" fill="#2a2a2a" stroke="#b0b0b0" stroke-width="0.9"/></svg>
<svg class="a" style="left:994px;top:252px;" width="9" height="8" viewBox="0 0 9 8"><circle cx="4.5" cy="4" r="2.3" fill="#2a2a2a" stroke="#b0b0b0" stroke-width="0.9"/></svg>
<svg class="a" style="left:570px;top:264px;" width="10" height="10" viewBox="0 0 10 10"><g transform="translate(5 5)"><path d="M-2.5 -3 L2.5 -3 L2.5 1 L0 3 L-2.5 1 Z" fill="#c0c0c0"/></g></svg>
<svg class="a" style="left:590px;top:264px;" width="10" height="10" viewBox="0 0 10 10"><g transform="translate(5 5)"><path d="M1 -3.5 L-0.5 -3.5 L-0.5 3.5 L1 3.5 M-0.5 0 L-1.5 0" fill="none" stroke="#c0c0c0" stroke-width="0.9"/></g></svg>
<svg class="a" style="left:607px;top:264px;" width="10" height="10" viewBox="0 0 10 10"><g transform="translate(5 5)"><path d="M-1 -3.5 L0.5 -3.5 L0.5 3.5 L-1 3.5 M0.5 0 L1.5 0" fill="none" stroke="#c0c0c0" stroke-width="0.9"/></g></svg>
<svg class="a" style="left:631px;top:264px;" width="10" height="10" viewBox="0 0 10 10"><g transform="translate(5 5)"><path d="M-3.5 -3.5 L-3.5 3.5" stroke="#c0c0c0" stroke-width="0.9"/><path d="M3.5 0 L-2 0 M0 -2 L-2 0 L0 2" fill="none" stroke="#c0c0c0" stroke-width="0.9"/></g></svg>
<svg class="a" style="left:649px;top:264px;" width="10" height="10" viewBox="0 0 10 10"><g transform="translate(5 5)"><path d="M1.5 -3 L1.5 3 L-3 0 Z" fill="#c0c0c0"/><path d="M3 -3 L3 3" stroke="#c0c0c0" stroke-width="0.9"/></g></svg>
<svg class="a" style="left:667px;top:264px;" width="10" height="10" viewBox="0 0 10 10"><g transform="translate(5 5)"><path d="M-3 -4 L-3 4 L3.5 0 Z" fill="#d8d8d8"/></g></svg>
<svg class="a" style="left:686px;top:264px;" width="10" height="10" viewBox="0 0 10 10"><g transform="translate(5 5)"><path d="M-1.5 -3 L-1.5 3 L3 0 Z" fill="#c0c0c0"/><path d="M-3 -3 L-3 3" stroke="#c0c0c0" stroke-width="0.9"/></g></svg>
<svg class="a" style="left:704px;top:264px;" width="10" height="10" viewBox="0 0 10 10"><g transform="translate(5 5)"><path d="M3.5 -3.5 L3.5 3.5" stroke="#c0c0c0" stroke-width="0.9"/><path d="M-3.5 0 L2 0 M0 -2 L2 0 L0 2" fill="none" stroke="#c0c0c0" stroke-width="0.9"/></g></svg>
<svg class="a" style="left:727px;top:264px;" width="10" height="10" viewBox="0 0 10 10"><g transform="translate(5 5)"><rect x="-4" y="0" width="3.5" height="3.5" fill="#c0c0c0"/><rect x="0.5" y="0" width="3.5" height="3.5" fill="#c0c0c0"/><rect x="-2" y="-3.5" width="4" height="3" fill="none" stroke="#c0c0c0" stroke-width="0.8"/></g></svg>
<svg class="a" style="left:745px;top:264px;" width="10" height="10" viewBox="0 0 10 10"><g transform="translate(5 5)"><rect x="-4" y="0" width="3" height="3.5" fill="none" stroke="#c0c0c0" stroke-width="0.8"/><rect x="1" y="0" width="3" height="3.5" fill="none" stroke="#c0c0c0" stroke-width="0.8"/><rect x="-2" y="-3.5" width="4" height="3" fill="#c0c0c0"/></g></svg>
<svg class="a" style="left:764px;top:264px;" width="10" height="10" viewBox="0 0 10 10"><g transform="translate(5 5)"><rect x="-4" y="-2.5" width="8" height="5.5" rx="1" fill="#c0c0c0"/><circle cx="0" cy="0.3" r="1.6" fill="#282828"/><rect x="-1.5" y="-3.5" width="3" height="1.5" fill="#c0c0c0"/></g></svg>
<svg class="a" style="left:782px;top:264px;" width="10" height="10" viewBox="0 0 10 10"><g transform="translate(5 5)"><rect x="-4" y="-3.5" width="5" height="5" fill="#c0c0c0"/><rect x="-0.5" y="-0.5" width="4.5" height="4.5" fill="#282828" stroke="#c0c0c0" stroke-width="0.9"/></g></svg>
<svg class="a" style="left:988px;top:266px;" width="8" height="8" viewBox="0 0 8 8"><path d="M4 0.5 L4 7.5 M0.5 4 L7.5 4" stroke="#d0d0d0" stroke-width="1.8"/></svg>
<div class="a" style="left:0px;top:282px;width:296px;height:212px;background:#2b2b2b;"></div>
<div class="t" style="left:5px;top:285px;color:#d0d0d0;font-size:7px;">项目<span style="font-size:6.5px">:</span></div>
<div class="t" style="left:22px;top:285px;color:#c8d0e0;font-size:5.5px;"><span style="font-size:5.5px">Word3</span></div>
<div class="t" style="left:45px;top:285px;color:#c8c8c8;font-size:7px;">≡</div>
<div class="a" style="left:3px;top:294px;width:47px;height:2px;background:#a0a0a0;"></div>
<div class="t" style="left:62px;top:285px;color:#a0a0a0;font-size:7px;">媒体浏览器</div>
<div class="t" style="left:120px;top:285px;color:#a0a0a0;font-size:7px;">库</div>
<div class="t" style="left:148px;top:285px;color:#a0a0a0;font-size:7px;">信息</div>
<div class="t" style="left:184px;top:285px;color:#a0a0a0;font-size:7px;">效果</div>
<div class="t" style="left:221px;top:285px;color:#a0a0a0;font-size:7px;">标记</div>
<div class="t" style="left:257px;top:285px;color:#a0a0a0;font-size:7px;width:17px;overflow:hidden">历史记</div>
<svg class="a" style="left:287px;top:286px;" width="8" height="7" viewBox="0 0 8 7"><path d="M1 0.8 L3.2 3.5 L1 6.2 M4.2 0.8 L6.4 3.5 L4.2 6.2" fill="none" stroke="#d8d8d8" stroke-width="1.3"/></svg>
<svg class="a" style="left:5px;top:301px;" width="10" height="7" viewBox="0 0 10 7"><path d="M0 0 L4 0 L5 1 L10 1 L10 7 L0 7 Z" fill="#5a5a5a"/></svg>
<div class="t" style="left:21px;top:301px;color:#7a8090;font-size:5px;"><span style="font-size:5px">Word3.prproj</span></div>
<div class="a" style="left:5px;top:313px;width:105px;height:11px;background:#1f1f1f;border-radius:1px"></div>
<svg class="a" style="left:8px;top:315px;" width="7" height="7" viewBox="0 0 7 7"><circle cx="4.3" cy="2.7" r="2" fill="none" stroke="#b0b0b0" stroke-width="0.9"/><path d="M3 4 L0.6 6.4" stroke="#b0b0b0" stroke-width="1"/></svg>
<svg class="a" style="left:120px;top:315px;" width="9" height="7" viewBox="0 0 9 7"><path d="M0 0 L3.5 0 L4.5 1 L9 1 L9 7 L0 7 Z" fill="#c0c0c0"/><rect x="3" y="3" width="3" height="2" fill="#333"/></svg>
<div class="t" style="left:237px;top:315px;color:#808080;font-size:6px;"><span style="font-size:5.5px">1</span> 项已选择，共 <span style="font-size:5.5px">3</span> 项</div>
<div class="a" style="left:5px;top:330px;width:283px;height:164px;background:#262626;border:1px solid #303030"></div>
<div class="a" style="left:6px;top:331px;width:94px;height:67px;background:#2c2c2c;"></div>
<div class="a" style="left:193px;top:331px;width:94px;height:67px;background:#2c2c2c;"></div>
<svg class="a" style="left:11px;top:335px" width="83" height="47"><use href="#scene" width="83" height="47"/></svg>
<svg class="a" style="left:76px;top:374px;" width="18" height="9" viewBox="0 0 18 9"><rect x="0.5" y="0.5" width="8" height="8" fill="#1e5a96" stroke="#c0c8d0" stroke-width="0.6"/><path d="M2 3 L7 3 M2 4.5 L7 4.5 M2 6 L7 6" stroke="#e0e8f0" stroke-width="0.7"/><rect x="9.5" y="0.5" width="8" height="8" fill="#3a3a3a" stroke="#c0c0c0" stroke-width="0.6"/><path d="M11 4.5 L16 4.5 M12 3 L11 4.5 L12 6 M15 3 L16 4.5 L15 6" fill="none" stroke="#e0e0e0" stroke-width="0.7"/></svg>
<div class="t" style="left:11px;top:386px;color:#a0a0a0;font-size:7.5px;">视频素材<b class="lp">（</b>总<b class="rp">）</b><span style="font-size:5.5px">.mp4</span></div>
<div class="t" style="left:81px;top:386px;color:#a0a0a0;font-size:5.5px;"><span style="font-size:5.5px">19:09</span></div>
<div class="a" style="left:100px;top:331px;width:93px;height:68px;background:#8a8a8a;"></div>
<svg class="a" style="left:133px;top:349px;" width="26" height="19" viewBox="0 0 26 19"><rect x="1" y="0.5" width="24.5" height="18" rx="1" fill="none" stroke="#2fcf8f" stroke-width="0.9"/><path d="M12.5 1 L12.5 18" stroke="#2fcf8f" stroke-width="0.5" opacity="0.6"/><path d="M2.8 8.0 L3.2 6.8 L3.6 5.9 L4.0 5.1 L4.4 4.6 L4.8 4.2 L5.2 4.0 L5.6 4.0 L6.0 4.1 L6.4 4.4 L6.8 4.8 L7.2 5.5 L7.6 6.3 L8.0 7.4 L8.4 8.9 L8.8 7.4 L9.2 5.7 L9.6 4.3 L10.0 3.3 L10.4 2.6 L10.8 2.0 L11.2 1.8 L11.6 1.7 L12.0 1.9 L12.4 2.3 L12.8 2.9 L13.2 3.8 L13.6 4.9 L14.0 6.5 L14.4 8.6 L14.8 8.0 L15.2 6.8 L15.6 5.9 L16.0 5.2 L16.4 4.7 L16.8 4.4 L17.2 4.3 L17.6 4.3 L18.0 4.6 L18.4 5.0 L18.8 5.5 L19.2 6.3 L19.6 7.4 L20.0 8.9 L20.4 8.7 L20.8 8.3 L21.2 8.0 L21.6 8.0 L22.0 8.1 L22.4 8.5 L22.8 9.0 L23.2 9.2 L23.6 9.2 L23.6 9.8 L23.2 9.8 L22.8 10.0 L22.4 10.5 L22.0 10.9 L21.6 11.0 L21.2 11.0 L20.8 10.7 L20.4 10.3 L20.0 10.1 L19.6 11.6 L19.2 12.7 L18.8 13.5 L18.4 14.0 L18.0 14.4 L17.6 14.7 L17.2 14.7 L16.8 14.6 L16.4 14.3 L16.0 13.8 L15.6 13.1 L15.2 12.2 L14.8 11.0 L14.4 10.4 L14.0 12.5 L13.6 14.1 L13.2 15.2 L12.8 16.1 L12.4 16.7 L12.0 17.1 L11.6 17.3 L11.2 17.2 L10.8 17.0 L10.4 16.4 L10.0 15.7 L9.6 14.7 L9.2 13.3 L8.8 11.6 L8.4 10.1 L8.0 11.6 L7.6 12.7 L7.2 13.5 L6.8 14.2 L6.4 14.6 L6.0 14.9 L5.6 15.0 L5.2 15.0 L4.8 14.8 L4.4 14.4 L4.0 13.9 L3.6 13.1 L3.2 12.2 L2.8 11.0 Z" fill="#2fcf8f"/></svg>
<svg class="a" style="left:180px;top:374px;" width="10" height="9" viewBox="0 0 10 9"><rect x="0.5" y="0.5" width="9" height="8" fill="#1e5a96" stroke="#2a6aa6" stroke-width="0.6"/><path d="M2 4.5 L8 4.5 M3 3 L2 4.5 L3 6 M7 3 L8 4.5 L7 6" fill="none" stroke="#d0e0f0" stroke-width="0.7"/></svg>
<div class="t" style="left:104px;top:386px;color:#1a1a1a;font-size:7px;">音频素材 <span style="font-size:6px">1967... 2:14:25920</span></div>
<svg class="a" style="left:199px;top:335px" width="84" height="48"><use href="#scene" width="84" height="48"/></svg>
<svg class="a" style="left:274px;top:374px;" width="9" height="9" viewBox="0 0 9 9"><rect x="0.5" y="0.5" width="8" height="8" fill="#1e4a76" stroke="#8aa0b8" stroke-width="0.6"/><path d="M2 6.5 L4 2.5 M4.5 6.5 L6.5 2.5" stroke="#d0d8e0" stroke-width="0.8"/></svg>
<div class="t" style="left:199px;top:386px;color:#a0a0a0;font-size:7.5px;">视频素材<b class="lp">（</b>总<b class="rp">）</b></div>
<div class="t" style="left:271px;top:386px;color:#a0a0a0;font-size:5.5px;"><span style="font-size:5.5px">19:09</span></div>
<div class="a" style="left:297px;top:282px;width:26px;height:212px;background:#2b2b2b;"></div>
<div class="a" style="left:303px;top:291px;width:13px;height:12px;background:#1e1e1e;"></div>
<svg class="a" style="left:304px;top:291px;" width="12" height="12" viewBox="0 0 12 12"><g transform="translate(6 6)"><path d="M-2.5 -4.5 L4 1.2 L0.8 1.5 L-2.5 5 Z" fill="#3196f0"/></g></svg>
<svg class="a" style="left:304px;top:305px;" width="12" height="12" viewBox="0 0 12 12"><g transform="translate(6 6)"><path d="M-4.5 -3 L-0.5 -3 M-4.5 3 L-0.5 3 M-4.5 -3 L-4.5 3" stroke="#c8c8c8" stroke-width="0.8" stroke-dasharray="1 0.8"/><path d="M-1 -1 L1.5 -1 L1.5 -3 L4.5 0 L1.5 3 L1.5 1 L-1 1 Z" fill="#c8c8c8"/><rect x="4.5" y="4" width="1" height="1" fill="#aaa"/></g></svg>
<svg class="a" style="left:304px;top:319px;" width="12" height="12" viewBox="0 0 12 12"><g transform="translate(6 6)"><path d="M0 -4 L0 4" stroke="#c8c8c8" stroke-width="0.9"/><path d="M-1.2 -2.2 L-4.2 0 L-1.2 2.2 Z M1.2 -2.2 L4.2 0 L1.2 2.2 Z" fill="#c8c8c8"/><rect x="4.5" y="4" width="1" height="1" fill="#aaa"/></g></svg>
<svg class="a" style="left:304px;top:333px;" width="12" height="12" viewBox="0 0 12 12"><g transform="translate(6 6)"><path d="M-4 -0.5 L-0.5 -4 L4 0.5 L0.5 4 Z" fill="none" stroke="#c8c8c8" stroke-width="1.3"/><path d="M-1 1 L1 -1" stroke="#c8c8c8" stroke-width="0.8"/></g></svg>
<svg class="a" style="left:304px;top:348px;" width="12" height="12" viewBox="0 0 12 12"><g transform="translate(6 6)"><path d="M-4.5 -4 L-4.5 4 M4.5 -4 L4.5 4" stroke="#c8c8c8" stroke-width="0.9"/><path d="M-3.3 0 L3.3 0" stroke="#c8c8c8" stroke-width="0.9"/><path d="M-3.5 0 L-1.5 -1.8 L-1.5 1.8 Z M3.5 0 L1.5 -1.8 L1.5 1.8 Z" fill="#c8c8c8"/><rect x="4.5" y="4" width="1" height="1" fill="#aaa"/></g></svg>
<svg class="a" style="left:304px;top:362px;" width="12" height="12" viewBox="0 0 12 12"><g transform="translate(6 6)"><path d="M-4 4 L-3.3 0.5 L1 -3.8 L3.8 -1 L-0.5 3.3 Z" fill="#c8c8c8"/><circle cx="-1" cy="1" r="0.8" fill="#2b2b2b"/><rect x="4.5" y="4" width="1" height="1" fill="#aaa"/></g></svg>
<svg class="a" style="left:304px;top:376px;" width="12" height="12" viewBox="0 0 12 12"><g transform="translate(6 6)"><path d="M-3.5 0.5 L-3.5 -2 L-2.5 -2 L-2.5 -0.5 L-1.8 -3.8 L-0.8 -3.8 L-0.8 -0.8 L0.2 -4 L1.2 -4 L1.2 -0.5 L2.5 -2.5 L3.5 -2 L2.2 2 L1 4 L-2 4 Z" fill="#c8c8c8"/><rect x="4.5" y="4" width="1" height="1" fill="#aaa"/></g></svg>
<svg class="a" style="left:304px;top:390px;" width="12" height="12" viewBox="0 0 12 12"><g transform="translate(6 6)"><path d="M-3.5 -4 L3.5 -4 M0 -4 L0 4 M-1.8 4 L1.8 4" fill="none" stroke="#c8c8c8" stroke-width="1.2"/><rect x="4.5" y="4" width="1" height="1" fill="#aaa"/></g></svg>
<div class="a" style="left:324px;top:282px;width:657px;height:212px;background:#2b2b2b;"></div>
<div class="a" style="left:324px;top:282px;width:657px;height:1px;background:#2d6aa0;"></div>
<div class="a" style="left:324px;top:282px;width:1px;height:212px;background:#2d6aa0;"></div>
<div class="a" style="left:980px;top:282px;width:1px;height:212px;background:#2d6aa0;"></div>
<div class="t" style="left:329px;top:285px;color:#909090;font-size:7px;">×</div>
<div class="t" style="left:340px;top:285px;color:#a8a8a8;font-size:7.5px;">视频素材<b class="lp">（</b>总<b class="rp">）</b></div>
<div class="t" style="left:391px;top:285px;color:#a8a8a8;font-size:7px;">≡</div>
<div class="t" style="left:334px;top:299px;color:#3a9af0;font-size:8.5px;font-weight:bold"><span style="font-size:8.5px">00:00:00:00</span></div>
<svg class="a" style="left:335px;top:310px;" width="10" height="9" viewBox="0 0 10 9"><path d="M0.5 2 L3.5 4.5 L6 6.5 L8.5 8.5" stroke="#3a9af0" stroke-width="1"/><circle cx="4" cy="1.5" r="1.1" fill="#3a9af0"/><circle cx="7.5" cy="3" r="1" fill="#3a9af0"/><circle cx="1.5" cy="6.5" r="1" fill="#3a9af0"/><rect x="4" y="5.5" width="1.6" height="1.6" fill="#3a9af0"/></svg>
<svg class="a" style="left:353px;top:311px;" width="9" height="8" viewBox="0 0 9 8"><path d="M1.6 8 L1.6 3.6 A2.9 2.9 0 0 1 7.4 3.6 L7.4 8" fill="none" stroke="#3a9af0" stroke-width="1.5"/></svg>
<svg class="a" style="left:371px;top:310px;" width="9" height="9" viewBox="0 0 9 9"><rect x="0.5" y="0.8" width="3" height="2.6" fill="#3a9af0"/><rect x="5.5" y="0.8" width="3" height="2.6" fill="#3a9af0"/><path d="M0.5 4.5 L3 4.5 L3 8.5 L0.5 8.5 Z" fill="#3a9af0" opacity="0.7"/><path d="M4 2.5 L8.8 6.5 L6.5 6.8 L5.2 8.8 Z" fill="#3a9af0"/></svg>
<svg class="a" style="left:391px;top:312px;" width="6" height="6" viewBox="0 0 6 6"><path d="M0.5 0.5 L5.5 0.5 L5.5 3.8 L3 5.8 L0.5 3.8 Z" fill="#c8c8c8"/></svg>
<svg class="a" style="left:407px;top:311px;" width="9" height="9" viewBox="0 0 9 9"><path d="M3.2 3.2 L7.8 7.8" stroke="#c8c8c8" stroke-width="1.6" stroke-linecap="round"/><circle cx="2.8" cy="2.8" r="2.2" fill="#c8c8c8"/><path d="M0.2 1.3 L1.8 2.9 L2.9 1.8 L1.3 0.2 Z" fill="#282828"/></svg>
<div class="t" style="left:450px;top:303.5px;color:#c0c0c0;font-size:5.7px;"><span style="font-size:5.7px">:00:00</span></div>
<div class="t" style="left:545px;top:303.5px;color:#c0c0c0;font-size:5.7px;"><span style="font-size:5.7px">00:00:05:00</span></div>
<div class="t" style="left:655px;top:303.5px;color:#c0c0c0;font-size:5.7px;"><span style="font-size:5.7px">00:00:10:00</span></div>
<div class="t" style="left:765px;top:303.5px;color:#c0c0c0;font-size:5.7px;"><span style="font-size:5.7px">00:00:15:00</span></div>
<div class="t" style="left:875px;top:303.5px;color:#c0c0c0;font-size:5.7px;"><span style="font-size:5.7px">00:00:20:00</span></div>
<svg class="a" style="left:0;top:0" width="1007" height="494"><rect x="460.6" y="315.8" width="0.9" height="2.5" fill="#555"/><rect x="471.6" y="315.8" width="0.9" height="2.5" fill="#555"/><rect x="482.5" y="315.8" width="0.9" height="2.5" fill="#555"/><rect x="493.5" y="315.8" width="0.9" height="2.5" fill="#555"/><rect x="504.4" y="315.8" width="0.9" height="2.5" fill="#555"/><rect x="515.4" y="315.8" width="0.9" height="2.5" fill="#555"/><rect x="526.4" y="315.8" width="0.9" height="2.5" fill="#555"/><rect x="537.3" y="315.8" width="0.9" height="2.5" fill="#555"/><rect x="548.2" y="315.8" width="0.9" height="2.5" fill="#555"/><rect x="559.2" y="313.5" width="0.9" height="4.5" fill="#555"/><rect x="570.1" y="315.8" width="0.9" height="2.5" fill="#555"/><rect x="581.1" y="315.8" width="0.9" height="2.5" fill="#555"/><rect x="592.0" y="315.8" width="0.9" height="2.5" fill="#555"/><rect x="603.0" y="315.8" width="0.9" height="2.5" fill="#555"/><rect x="614.0" y="315.8" width="0.9" height="2.5" fill="#555"/><rect x="624.9" y="315.8" width="0.9" height="2.5" fill="#555"/><rect x="635.8" y="315.8" width="0.9" height="2.5" fill="#555"/><rect x="646.8" y="315.8" width="0.9" height="2.5" fill="#555"/><rect x="657.8" y="315.8" width="0.9" height="2.5" fill="#555"/><rect x="668.7" y="313.5" width="0.9" height="4.5" fill="#555"/><rect x="679.6" y="315.8" width="0.9" height="2.5" fill="#555"/><rect x="690.6" y="315.8" width="0.9" height="2.5" fill="#555"/><rect x="701.5" y="315.8" width="0.9" height="2.5" fill="#555"/><rect x="712.5" y="315.8" width="0.9" height="2.5" fill="#555"/><rect x="723.5" y="315.8" width="0.9" height="2.5" fill="#555"/><rect x="734.4" y="315.8" width="0.9" height="2.5" fill="#555"/><rect x="745.3" y="315.8" width="0.9" height="2.5" fill="#555"/><rect x="756.3" y="315.8" width="0.9" height="2.5" fill="#555"/><rect x="767.2" y="315.8" width="0.9" height="2.5" fill="#555"/><rect x="778.2" y="313.5" width="0.9" height="4.5" fill="#555"/><rect x="789.1" y="315.8" width="0.9" height="2.5" fill="#555"/><rect x="800.1" y="315.8" width="0.9" height="2.5" fill="#555"/><rect x="811.0" y="315.8" width="0.9" height="2.5" fill="#555"/><rect x="822.0" y="315.8" width="0.9" height="2.5" fill="#555"/><rect x="833.0" y="315.8" width="0.9" height="2.5" fill="#555"/><rect x="843.9" y="315.8" width="0.9" height="2.5" fill="#555"/><rect x="854.8" y="315.8" width="0.9" height="2.5" fill="#555"/><rect x="865.8" y="315.8" width="0.9" height="2.5" fill="#555"/><rect x="876.8" y="315.8" width="0.9" height="2.5" fill="#555"/><rect x="887.7" y="313.5" width="0.9" height="4.5" fill="#555"/><rect x="898.6" y="315.8" width="0.9" height="2.5" fill="#555"/><rect x="909.6" y="315.8" width="0.9" height="2.5" fill="#555"/><rect x="920.5" y="315.8" width="0.9" height="2.5" fill="#555"/><rect x="931.5" y="315.8" width="0.9" height="2.5" fill="#555"/><rect x="942.4" y="315.8" width="0.9" height="2.5" fill="#555"/><rect x="953.4" y="315.8" width="0.9" height="2.5" fill="#555"/><rect x="964.3" y="315.8" width="0.9" height="2.5" fill="#555"/></svg>
<div class="a" style="left:450px;top:319px;width:425px;height:1px;background:#d8d000;"></div>
<div class="a" style="left:325px;top:320px;width:124px;height:174px;background:#313131;"></div>
<div class="a" style="left:450px;top:320px;width:530px;height:174px;background:#282828;"></div>
<div class="a" style="left:325px;top:363px;width:124px;height:1px;background:#2a2a2a;"></div>
<div class="a" style="left:450px;top:363px;width:518px;height:1px;background:#333333;"></div>
<div class="a" style="left:325px;top:409px;width:124px;height:1px;background:#2a2a2a;"></div>
<div class="a" style="left:450px;top:409px;width:518px;height:1px;background:#333333;"></div>
<div class="a" style="left:325px;top:455px;width:124px;height:1px;background:#2a2a2a;"></div>
<div class="a" style="left:450px;top:455px;width:518px;height:1px;background:#333333;"></div>
<div class="a" style="left:359px;top:364px;width:17px;height:45px;background:#175a8e;"></div>
<div class="a" style="left:331px;top:411px;width:17px;height:45px;background:#175a8e;"></div>
<div class="a" style="left:359px;top:411px;width:17px;height:45px;background:#175a8e;"></div>
<div class="a" style="left:359px;top:456px;width:17px;height:38px;background:#175a8e;"></div>
<div class="t" style="left:364px;top:333px;color:#a0a0a0;font-size:5.5px;"><span style="font-size:5.5px">V2</span></div>
<div class="t" style="left:364px;top:378px;color:#a8b8c8;font-size:5.5px;"><span style="font-size:5.5px">V1</span></div>
<div class="t" style="left:336px;top:424px;color:#a8b8c8;font-size:5.5px;"><span style="font-size:5.5px">A1</span></div>
<div class="t" style="left:364px;top:424px;color:#a8b8c8;font-size:5.5px;"><span style="font-size:5.5px">A1</span></div>
<div class="t" style="left:364px;top:469px;color:#a8b8c8;font-size:5.5px;"><span style="font-size:5.5px">A2</span></div>
<svg class="a" style="left:350px;top:334px;" width="6" height="6" viewBox="0 0 6 6"><path d="M1.5 2.5 L1.5 1.6 A1.3 1.3 0 0 1 4.1 1.6" fill="none" stroke="#b0b0b0" stroke-width="0.8"/><rect x="0.8" y="2.5" width="4.4" height="3" fill="#b0b0b0"/></svg>
<svg class="a" style="left:350px;top:379px;" width="6" height="6" viewBox="0 0 6 6"><path d="M1.5 2.5 L1.5 1.6 A1.3 1.3 0 0 1 4.1 1.6" fill="none" stroke="#b0b0b0" stroke-width="0.8"/><rect x="0.8" y="2.5" width="4.4" height="3" fill="#b0b0b0"/></svg>
<svg class="a" style="left:350px;top:425px;" width="6" height="6" viewBox="0 0 6 6"><path d="M1.5 2.5 L1.5 1.6 A1.3 1.3 0 0 1 4.1 1.6" fill="none" stroke="#b0b0b0" stroke-width="0.8"/><rect x="0.8" y="2.5" width="4.4" height="3" fill="#b0b0b0"/></svg>
<svg class="a" style="left:350px;top:470px;" width="6" height="6" viewBox="0 0 6 6"><path d="M1.5 2.5 L1.5 1.6 A1.3 1.3 0 0 1 4.1 1.6" fill="none" stroke="#b0b0b0" stroke-width="0.8"/><rect x="0.8" y="2.5" width="4.4" height="3" fill="#b0b0b0"/></svg>
<div class="t" style="left:377px;top:334px;color:#909090;font-size:7px;">视频 <span style="font-size:6px">2</span></div>
<div class="t" style="left:377px;top:380px;color:#909090;font-size:7px;">视频 <span style="font-size:6px">1</span></div>
<div class="t" style="left:377px;top:427px;color:#909090;font-size:7px;">音频 <span style="font-size:6px">1</span></div>
<div class="t" style="left:377px;top:472px;color:#909090;font-size:7px;">音频 <span style="font-size:6px">2</span></div>
<div class="a" style="left:376px;top:320px;width:28px;height:11px;background:#2b2b2b;"></div>
<svg class="a" style="left:379px;top:323px;" width="8" height="6" viewBox="0 0 8 6"><path d="M0.5 0.5 L3 0.5 L3.5 1.2 L6.5 1.2 L6.5 5.5 L0.5 5.5 Z" fill="#c8c8c8"/><rect x="1.5" y="2.5" width="4" height="2" fill="#555"/></svg>
<svg class="a" style="left:393px;top:323px;" width="8" height="6" viewBox="0 0 8 6"><path d="M0.3 3 Q4 -0.8 7.7 3 Q4 6.8 0.3 3 Z" fill="none" stroke="#d0d0d0" stroke-width="1"/><circle cx="4" cy="3" r="1.3" fill="#d0d0d0"/></svg>
<div class="a" style="left:376px;top:365px;width:28px;height:11px;background:#2b2b2b;"></div>
<svg class="a" style="left:379px;top:368px;" width="8" height="6" viewBox="0 0 8 6"><path d="M0.5 0.5 L3 0.5 L3.5 1.2 L6.5 1.2 L6.5 5.5 L0.5 5.5 Z" fill="#c8c8c8"/><rect x="1.5" y="2.5" width="4" height="2" fill="#555"/></svg>
<svg class="a" style="left:393px;top:368px;" width="8" height="6" viewBox="0 0 8 6"><path d="M0.3 3 Q4 -0.8 7.7 3 Q4 6.8 0.3 3 Z" fill="none" stroke="#d0d0d0" stroke-width="1"/><circle cx="4" cy="3" r="1.3" fill="#d0d0d0"/></svg>
<div class="a" style="left:376px;top:411px;width:14px;height:12px;background:#2b2b2b;"></div>
<svg class="a" style="left:379px;top:414px;" width="8" height="6" viewBox="0 0 8 6"><path d="M0.5 0.5 L3 0.5 L3.5 1.2 L6.5 1.2 L6.5 5.5 L0.5 5.5 Z" fill="#c8c8c8"/><rect x="1.5" y="2.5" width="4" height="2" fill="#555"/></svg>
<div class="t" style="left:395px;top:413px;color:#b0b0b0;font-size:6px;"><span style="font-size:6px">M</span></div>
<div class="t" style="left:409px;top:413px;color:#b0b0b0;font-size:6px;"><span style="font-size:6px">S</span></div>
<svg class="a" style="left:422px;top:414px;" width="6" height="7" viewBox="0 0 6 7"><ellipse cx="3" cy="3.2" rx="2" ry="3" fill="#585858"/></svg>
<div class="a" style="left:376px;top:456px;width:14px;height:12px;background:#2b2b2b;"></div>
<svg class="a" style="left:379px;top:459px;" width="8" height="6" viewBox="0 0 8 6"><path d="M0.5 0.5 L3 0.5 L3.5 1.2 L6.5 1.2 L6.5 5.5 L0.5 5.5 Z" fill="#c8c8c8"/><rect x="1.5" y="2.5" width="4" height="2" fill="#555"/></svg>
<div class="t" style="left:395px;top:458px;color:#b0b0b0;font-size:6px;"><span style="font-size:6px">M</span></div>
<div class="t" style="left:409px;top:458px;color:#b0b0b0;font-size:6px;"><span style="font-size:6px">S</span></div>
<svg class="a" style="left:422px;top:459px;" width="6" height="7" viewBox="0 0 6 7"><ellipse cx="3" cy="3.2" rx="2" ry="3" fill="#585858"/></svg>
<svg class="a" style="left:382.5px;top:349.5px;" width="34" height="7" viewBox="0 0 34 7"><path d="M3.5 0.5 L0.8 3.5 L3.5 6.5 Z" fill="#555"/><circle cx="14.5" cy="3.5" r="1.7" fill="none" stroke="#555" stroke-width="0.9"/><path d="M26.5 0.5 L29.2 3.5 L26.5 6.5 Z" fill="#555"/></svg>
<svg class="a" style="left:382.5px;top:394.5px;" width="34" height="7" viewBox="0 0 34 7"><path d="M3.5 0.5 L0.8 3.5 L3.5 6.5 Z" fill="#555"/><circle cx="14.5" cy="3.5" r="1.7" fill="none" stroke="#555" stroke-width="0.9"/><path d="M26.5 0.5 L29.2 3.5 L26.5 6.5 Z" fill="#555"/></svg>
<svg class="a" style="left:396.5px;top:441.5px;" width="34" height="7" viewBox="0 0 34 7"><path d="M3.5 0.5 L0.8 3.5 L3.5 6.5 Z" fill="#555"/><circle cx="14.5" cy="3.5" r="1.7" fill="none" stroke="#555" stroke-width="0.9"/><path d="M26.5 0.5 L29.2 3.5 L26.5 6.5 Z" fill="#555"/></svg>
<svg class="a" style="left:396.5px;top:486.5px;" width="34" height="7" viewBox="0 0 34 7"><path d="M3.5 0.5 L0.8 3.5 L3.5 6.5 Z" fill="#555"/><circle cx="14.5" cy="3.5" r="1.7" fill="none" stroke="#555" stroke-width="0.9"/><path d="M26.5 0.5 L29.2 3.5 L26.5 6.5 Z" fill="#555"/></svg>
<svg class="a" style="left:380px;top:440.5px;" width="8" height="8" viewBox="0 0 8 8"><circle cx="3" cy="3.5" r="2.3" fill="none" stroke="#b0b0b0" stroke-width="0.9"/><path d="M5 6 L7.5 6" stroke="#b0b0b0" stroke-width="0.8"/></svg>
<svg class="a" style="left:380px;top:485.5px;" width="8" height="8" viewBox="0 0 8 8"><circle cx="3" cy="3.5" r="2.3" fill="none" stroke="#b0b0b0" stroke-width="0.9"/><path d="M5 6 L7.5 6" stroke="#b0b0b0" stroke-width="0.8"/></svg>
<div class="a" style="left:449px;top:313px;width:1px;height:181px;background:#3a8ee6;"></div>
<svg class="a" style="left:447px;top:312px;" width="6" height="7" viewBox="0 0 6 7"><path d="M1 1 L5 1 L5 5 L3 6.5 L1 5 Z" fill="#3196f0"/></svg>
<div class="a" style="left:450px;top:364px;width:425px;height:45px;background:#7aa2d6;border:2px solid #d4d4d4"></div>
<div class="a" style="left:452px;top:372px;width:421px;height:1px;background:#b8c8dc;"></div>
<svg class="a" style="left:454px;top:366px;" width="6" height="5" viewBox="0 0 6 5"><rect x="0.5" y="0.5" width="5" height="4" fill="#555" stroke="#999" stroke-width="0.6"/></svg>
<div class="t" style="left:465px;top:365px;color:#2a2a2a;font-size:6px;">视频素材<b class="lp">（</b>总<b class="rp">）</b><span style="font-size:5.5px">.mp4</span></div>
<svg class="a" style="left:451px;top:374px" width="77" height="32"><use href="#scene" width="77" height="32"/></svg>
<svg class="a" style="left:0;top:0" width="1007" height="494" viewBox="0 0 1007 494"><rect x="450" y="410" width="425" height="46" fill="#1b6a4c"/><path d="M459 433 L459 426 L460 426.0 L460.6 415.0 L462.1 420.0 L463.6 419.6 L465.1 421.4 L466.6 424.7 L468.1 423.4 L469.6 424.7 L471.1 425.7 L472.6 425.0 L474.1 425.7 L475.6 426.2 L476.9 426.0 L477 426.0 L477.6 417.0 L479.1 421.3 L480.6 422.2 L482.1 423.6 L483.6 424.6 L485.1 424.0 L486.6 425.0 L488.1 425.6 L489.6 425.6 L491.1 425.3 L492.6 426.0 L494.1 425.7 L494.9 425.5 L495 426.0 L495.6 417.0 L497.1 418.4 L498.6 422.3 L500.1 421.4 L501.6 424.1 L503.1 424.5 L504.6 425.0 L506.1 425.3 L507.6 425.1 L509.1 425.7 L510.6 426.2 L511.9 425.6 L512 426.0 L512.6 417.0 L514.1 420.5 L515.6 422.7 L517.1 424.3 L518.6 423.7 L520.1 424.6 L521.6 425.5 L523.1 423.1 L524.6 425.5 L526.1 425.3 L527.6 426.0 L528 426.0 L528.6 414.0 L530.1 419.4 L531.6 421.0 L533.1 423.4 L534.6 424.3 L536.1 424.5 L536.9 425.5 L537 426.0 L537.6 418.0 L539.1 421.6 L540.6 422.4 L542.1 423.9 L543.6 421.6 L545.1 424.7 L545.9 424.8 L546 426.0 L546.6 421.0 L548.1 420.9 L549.6 423.1 L551.1 425.0 L552.6 424.3 L554.1 425.8 L555.6 426.0 L557.1 425.5 L558.6 426.0 L560.1 425.9 L561.6 425.3 L563.1 425.8 L564.6 424.6 L566.1 426.1 L567.6 423.3 L569.1 425.8 L570.6 423.7 L572.1 425.2 L572.9 425.6 L573 426.0 L573.6 423.0 L575.1 424.3 L576.6 424.4 L578.1 424.8 L579.6 425.7 L581.1 424.9 L582.6 425.2 L584.1 425.4 L585.6 425.7 L587.1 424.8 L588.6 426.1 L590.1 425.2 L591.6 425.3 L593.1 425.2 L594.6 426.1 L596.1 426.2 L597.6 425.6 L598.9 425.4 L599 426.0 L599.6 414.0 L601.1 419.0 L602.6 422.0 L604.1 422.5 L605.6 423.7 L606.9 424.9 L607 426.0 L607.6 418.0 L609.1 421.6 L610.6 422.4 L612.1 424.1 L613.6 424.3 L615.1 425.5 L615.9 424.7 L616 426.0 L616.6 416.0 L618.1 420.7 L619.6 421.6 L621.1 423.7 L622.6 421.8 L624.1 424.6 L625.6 424.6 L627.1 424.9 L628.6 425.9 L630.1 425.9 L631.6 425.6 L632.9 425.8 L633 426.0 L633.6 414.0 L635.1 418.7 L636.6 421.6 L638.1 422.5 L639.6 423.5 L641.1 424.6 L641.9 425.4 L642 426.0 L642.6 417.0 L644.1 418.6 L645.6 423.0 L647.1 423.4 L648.6 424.6 L650.1 424.8 L650.9 425.6 L651 426.0 L651.6 418.0 L653.1 421.7 L654.6 422.6 L656.1 423.9 L657.6 424.1 L659.1 424.9 L660.6 425.3 L662.1 425.5 L663.6 425.6 L665.1 425.4 L666.6 425.2 L667.9 425.7 L668 426.0 L668.6 416.0 L670.1 419.9 L671.6 422.7 L673.1 424.0 L674.6 424.8 L676.1 424.5 L676.9 425.4 L677 426.0 L677.6 416.0 L679.1 420.1 L680.6 421.8 L682.1 423.8 L683.6 424.4 L685.1 424.2 L685.9 425.4 L686 426.0 L686.6 419.0 L688.1 421.9 L689.6 423.7 L691.1 421.8 L692.6 423.1 L694.1 425.0 L695.6 425.9 L697.1 425.2 L698.6 426.1 L700.1 426.2 L701.6 426.0 L703.1 425.8 L704.6 425.4 L706.1 426.2 L707.6 425.7 L709.1 423.9 L710.6 423.0 L712.1 425.6 L713.6 426.3 L715.1 426.3 L716.6 425.9 L718.1 425.7 L719.6 426.1 L721.1 425.8 L722.6 426.3 L724.1 426.3 L725.6 426.0 L727.1 425.5 L728.6 425.8 L730.1 424.5 L731.6 426.4 L733.1 425.7 L734.6 425.8 L736.1 426.3 L736.9 425.9 L737 426.0 L737.6 414.0 L739.1 418.8 L740.6 421.5 L742.1 422.4 L743.6 423.6 L745.1 424.5 L746.6 424.0 L748.1 425.8 L749.6 425.8 L751.1 426.1 L752.6 425.2 L753.9 426.0 L754 426.0 L754.6 415.0 L756.1 420.0 L757.6 422.3 L759.1 423.5 L760.6 423.6 L762.1 425.0 L763.6 425.3 L765.1 425.9 L766.6 425.5 L768.1 426.0 L769.6 426.3 L770.9 426.2 L771 426.0 L771.6 414.0 L773.1 418.2 L774.6 421.8 L776.1 423.0 L777.6 423.8 L779.1 424.2 L780.6 425.2 L782.1 425.7 L783.6 422.6 L785.1 425.1 L786.6 425.4 L788.1 426.1 L788.9 425.7 L789 426.0 L789.6 416.0 L791.1 419.9 L792.6 422.1 L794.1 423.3 L795.6 423.3 L797.1 422.3 L798.6 425.1 L800.1 425.2 L801.6 422.9 L803.1 425.3 L804.6 425.6 L805.9 426.2 L806 426.0 L806.6 415.0 L808.1 418.5 L809.6 421.6 L811.1 423.0 L812.6 424.1 L814.1 424.7 L815.6 424.8 L817.1 423.9 L818.6 425.8 L820.1 425.8 L821.6 424.7 L822.9 425.5 L823 426.0 L823.6 415.0 L825.1 419.6 L826.6 421.8 L828.1 420.5 L829.6 424.5 L831.1 422.3 L832.6 424.7 L834.1 425.4 L835.6 425.8 L837.1 426.0 L838.6 426.1 L840.1 425.2 L840.9 425.3 L841 426.0 L841.6 414.0 L843.1 418.8 L844.6 421.8 L846.1 422.0 L847.6 424.0 L849.1 424.9 L849.9 425.0 L850 426.0 L850.6 415.0 L852.1 416.9 L853.6 421.5 L855.1 422.7 L856.6 423.6 L858.1 424.9 L858.9 424.3 L859 426.0 L859.6 418.0 L861.1 421.6 L862.6 422.0 L864.1 423.5 L865.6 424.1 L867.1 425.3 L867.9 425.5 L868 426.0 L868.6 420.0 L870.1 422.0 L871.6 423.3 L873.1 423.9 L874.6 424.8 L875 426 L875 433 Z" fill="#2ecf8e"/><rect x="452" y="428" width="423" height="1" fill="#d8efe4"/><path d="M459 456 L459 450 L460 450.0 L460.6 443.4 L462.1 446.5 L463.6 447.6 L465.1 447.5 L466.6 448.4 L468.1 449.5 L469.6 449.4 L471.1 449.6 L472.6 450.0 L474.1 449.2 L475.6 449.4 L476.9 450.3 L477 450.0 L477.6 444.6 L479.1 446.7 L480.6 448.4 L482.1 448.6 L483.6 448.5 L485.1 448.8 L486.6 449.1 L488.1 449.1 L489.6 450.1 L491.1 450.0 L492.6 449.8 L494.1 450.0 L494.9 449.9 L495 450.0 L495.6 444.6 L497.1 446.7 L498.6 447.4 L500.1 448.0 L501.6 448.4 L503.1 449.7 L504.6 448.9 L506.1 449.5 L507.6 450.0 L509.1 449.6 L510.6 450.3 L511.9 447.6 L512 450.0 L512.6 444.6 L514.1 446.9 L515.6 448.1 L517.1 446.8 L518.6 449.5 L520.1 449.5 L521.6 448.9 L523.1 449.0 L524.6 450.2 L526.1 450.3 L527.6 449.8 L528 450.0 L528.6 442.8 L530.1 444.6 L531.6 447.4 L533.1 447.6 L534.6 448.8 L536.1 448.9 L536.9 449.2 L537 450.0 L537.6 445.2 L539.1 446.6 L540.6 448.2 L542.1 449.0 L543.6 448.5 L545.1 448.2 L545.9 448.0 L546 450.0 L546.6 447.0 L548.1 446.6 L549.6 448.8 L551.1 449.3 L552.6 448.4 L554.1 449.3 L555.6 449.9 L557.1 449.6 L558.6 449.9 L560.1 449.9 L561.6 450.0 L563.1 448.2 L564.6 449.5 L566.1 450.1 L567.6 450.1 L569.1 449.9 L570.6 450.3 L572.1 450.0 L572.9 449.9 L573 450.0 L573.6 448.2 L575.1 449.2 L576.6 449.0 L578.1 449.4 L579.6 450.0 L581.1 450.0 L582.6 449.3 L584.1 450.0 L585.6 449.6 L587.1 450.0 L588.6 450.0 L590.1 450.1 L591.6 449.9 L593.1 449.9 L594.6 448.5 L596.1 449.3 L597.6 449.9 L598.9 449.3 L599 450.0 L599.6 442.8 L601.1 445.6 L602.6 447.0 L604.1 448.4 L605.6 447.7 L606.9 449.3 L607 450.0 L607.6 445.2 L609.1 447.7 L610.6 447.9 L612.1 448.2 L613.6 447.5 L615.1 449.7 L615.9 449.2 L616 450.0 L616.6 444.0 L618.1 446.6 L619.6 447.5 L621.1 448.7 L622.6 448.9 L624.1 449.4 L625.6 449.4 L627.1 449.9 L628.6 449.1 L630.1 448.0 L631.6 448.4 L632.9 450.0 L633 450.0 L633.6 442.8 L635.1 445.9 L636.6 446.2 L638.1 448.6 L639.6 449.2 L641.1 447.5 L641.9 449.5 L642 450.0 L642.6 444.6 L644.1 447.0 L645.6 447.8 L647.1 448.9 L648.6 449.4 L650.1 449.0 L650.9 449.9 L651 450.0 L651.6 445.2 L653.1 447.3 L654.6 447.7 L656.1 448.3 L657.6 449.2 L659.1 449.3 L660.6 449.6 L662.1 449.6 L663.6 449.6 L665.1 450.2 L666.6 449.8 L667.9 449.2 L668 450.0 L668.6 444.0 L670.1 446.0 L671.6 447.9 L673.1 448.9 L674.6 448.7 L676.1 448.9 L676.9 449.0 L677 450.0 L677.6 444.0 L679.1 447.0 L680.6 448.2 L682.1 447.4 L683.6 449.4 L685.1 448.0 L685.9 449.8 L686 450.0 L686.6 445.8 L688.1 447.3 L689.6 447.8 L691.1 446.9 L692.6 449.1 L694.1 449.9 L695.6 448.0 L697.1 449.5 L698.6 450.0 L700.1 450.0 L701.6 449.4 L703.1 449.9 L704.6 450.0 L706.1 450.3 L707.6 449.2 L709.1 449.5 L710.6 449.6 L712.1 449.6 L713.6 449.8 L715.1 449.3 L716.6 450.3 L718.1 449.3 L719.6 449.9 L721.1 450.2 L722.6 450.2 L724.1 450.0 L725.6 449.6 L727.1 450.0 L728.6 449.9 L730.1 449.7 L731.6 449.0 L733.1 449.9 L734.6 450.0 L736.1 449.5 L736.9 449.2 L737 450.0 L737.6 442.8 L739.1 445.7 L740.6 446.8 L742.1 448.1 L743.6 448.4 L745.1 449.2 L746.6 448.8 L748.1 449.8 L749.6 449.3 L751.1 449.1 L752.6 450.0 L753.9 450.0 L754 450.0 L754.6 443.4 L756.1 445.9 L757.6 447.0 L759.1 447.8 L760.6 448.9 L762.1 448.0 L763.6 449.6 L765.1 449.4 L766.6 450.2 L768.1 449.8 L769.6 450.1 L770.9 449.2 L771 450.0 L771.6 442.8 L773.1 444.9 L774.6 445.4 L776.1 445.9 L777.6 448.9 L779.1 448.8 L780.6 449.1 L782.1 449.1 L783.6 449.3 L785.1 449.5 L786.6 450.2 L788.1 449.9 L788.9 449.5 L789 450.0 L789.6 444.0 L791.1 446.9 L792.6 447.5 L794.1 447.9 L795.6 449.3 L797.1 449.6 L798.6 449.1 L800.1 449.5 L801.6 449.7 L803.1 448.6 L804.6 449.4 L805.9 449.5 L806 450.0 L806.6 443.4 L808.1 446.5 L809.6 445.8 L811.1 448.6 L812.6 449.0 L814.1 449.3 L815.6 449.0 L817.1 448.2 L818.6 448.6 L820.1 449.4 L821.6 450.1 L822.9 449.5 L823 450.0 L823.6 443.4 L825.1 445.9 L826.6 447.9 L828.1 448.6 L829.6 448.7 L831.1 449.4 L832.6 449.9 L834.1 449.1 L835.6 449.8 L837.1 449.6 L838.6 449.2 L840.1 450.0 L840.9 449.8 L841 450.0 L841.6 442.8 L843.1 444.1 L844.6 447.0 L846.1 448.1 L847.6 449.1 L849.1 449.6 L849.9 449.1 L850 450.0 L850.6 443.4 L852.1 446.1 L853.6 447.0 L855.1 447.9 L856.6 449.3 L858.1 448.2 L858.9 448.8 L859 450.0 L859.6 445.2 L861.1 446.7 L862.6 448.5 L864.1 448.6 L865.6 448.8 L867.1 449.5 L867.9 448.9 L868 450.0 L868.6 446.4 L870.1 447.9 L871.6 447.9 L873.1 449.5 L874.6 449.7 L875 450 L875 456 Z" fill="#2ecf8e"/><rect x="455" y="412" width="6" height="5" fill="#999" stroke="#ccc" stroke-width="0.5"/><rect x="451" y="424" width="6" height="7" fill="#164a36"/><rect x="451" y="443" width="6" height="7" fill="#164a36"/></svg>
<div class="a" style="left:969px;top:322px;width:6px;height:172px;background:#353535;border-radius:3px"></div>
<svg class="a" style="left:968px;top:331.5px;" width="8" height="8" viewBox="0 0 8 8"><circle cx="4" cy="4" r="2.2" fill="#2a2a2a" stroke="#a0a0a0" stroke-width="0.9"/></svg>
<svg class="a" style="left:968px;top:401.5px;" width="8" height="8" viewBox="0 0 8 8"><circle cx="4" cy="4" r="2.2" fill="#2a2a2a" stroke="#a0a0a0" stroke-width="0.9"/></svg>
<svg class="a" style="left:968px;top:410.5px;" width="8" height="8" viewBox="0 0 8 8"><circle cx="4" cy="4" r="2.2" fill="#2a2a2a" stroke="#a0a0a0" stroke-width="0.9"/></svg>
<svg class="a" style="left:968px;top:482px;" width="8" height="8" viewBox="0 0 8 8"><circle cx="4" cy="4" r="2.2" fill="#2a2a2a" stroke="#a0a0a0" stroke-width="0.9"/></svg>
<svg class="a" style="left:0;top:0" width="1007" height="494" viewBox="0 0 1007 494">
<path d="M897 336 L958 335" stroke="#e01010" stroke-width="1.8"/><path d="M968 335 L956 331 L957 339 Z" fill="#e01010"/>
<path d="M934 438 L958 425" stroke="#e01010" stroke-width="1.8"/><path d="M967 421 L954 422 L958 429 Z" fill="#e01010"/>
<path d="M480 479 L447 491.3" stroke="#e01010" stroke-width="1.6"/><path d="M439 494.5 L446.2 488 L448.6 494.6 Z" fill="#e01010"/>
</svg>
<svg class="a" style="left:661px;top:304px;" width="8" height="11" viewBox="0 0 8 11"><path d="M1 0.8 L1 8.5 L2.9 6.6 L4.3 9.6 L5.8 8.9 L4.5 6 L7 6 Z" fill="#fff" stroke="#000" stroke-width="0.8" stroke-linejoin="round"/></svg>
<div class="a" style="left:983px;top:282px;width:24px;height:212px;background:#2b2b2b;"></div>
<div class="a" style="left:990px;top:295px;width:12px;height:199px;background:#282828;border:1px solid #101010"></div>
<div class="a" style="left:991px;top:301px;width:10px;height:1px;background:#101010;"></div>
<div class="a" style="left:996px;top:296px;width:1px;height:5px;background:#101010;"></div>
</body></html>
